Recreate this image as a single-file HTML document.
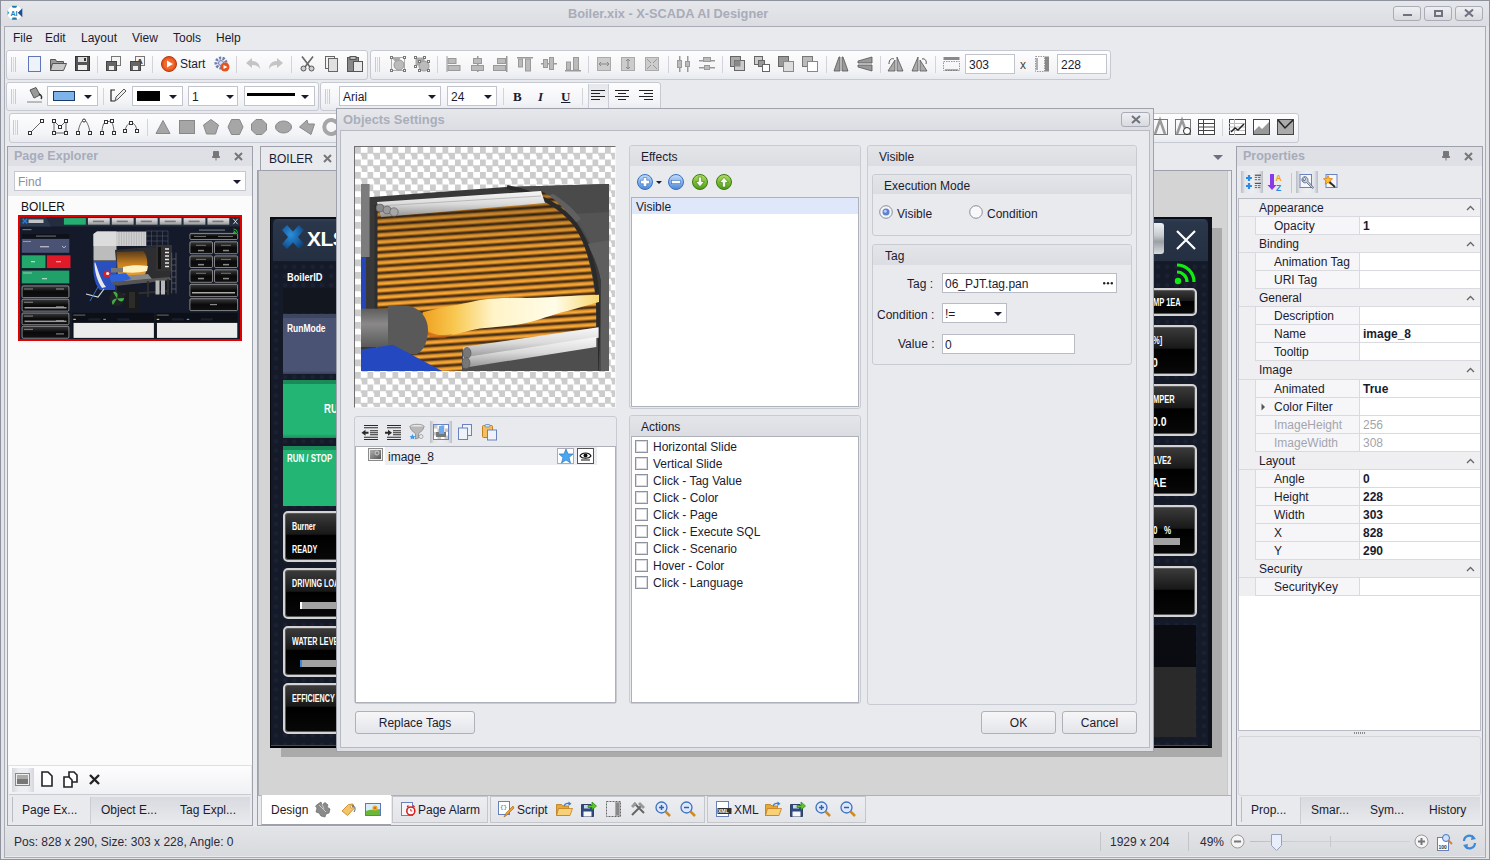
<!DOCTYPE html>
<html><head><meta charset="utf-8">
<style>
*{box-sizing:border-box;margin:0;padding:0}
html,body{width:1490px;height:860px;overflow:hidden;background:#e9eaee;font-family:"Liberation Sans",sans-serif;font-size:12px;color:#1b1b30}
.a{position:absolute}
.t{position:absolute;white-space:nowrap;line-height:1;margin-top:1px}
.tb{position:absolute;background:linear-gradient(#fdfdfe,#f3f4f7 70%,#e9eaef);border:1px solid #c6c9d1;border-radius:3px}
.grip{position:absolute;top:7px;width:5px;height:15px;border-left:1px solid #c9cbd1;border-right:1px solid #c9cbd1}
.grip:after{content:"";position:absolute;left:1px;top:0;width:1px;height:15px;background:#d8dade}
.sep{position:absolute;top:6px;width:1px;height:17px;background:#d2d4da}
.ic{position:absolute;width:16px;height:16px}
.dd{position:absolute;background:#fff;border:1px solid #c1c4cc}
.arr{position:absolute;width:0;height:0;border-left:4px solid transparent;border-right:4px solid transparent;border-top:4px solid #1b1b30}
.pnl{position:absolute;border:1px solid #9ea1ab}
.ptitle{position:absolute;font-weight:bold;color:#a7acba;font-size:12.5px;line-height:1;white-space:nowrap}
.btn{position:absolute;background:linear-gradient(#f6f6f8,#e4e5ea);border:1px solid #aeb1ba;border-radius:3px;text-align:center;font-size:12px;line-height:22px}
.grp{position:absolute;border:1px solid #c5c8cf;border-radius:3px;background:#e9eaee}
.ghdr{position:absolute;left:0;right:0;top:0;background:#dcdde2;border-radius:3px 3px 0 0}
.chk{position:absolute;left:5px;width:13px;height:13px;border:1px solid #a2a5ae;background:linear-gradient(#eeeef0,#fff)}
.prop{position:absolute;left:0;width:241px;height:18px}
svg{position:absolute;overflow:visible}
</style></head><body>
<!-- window frame -->
<div class="a" style="left:0;top:0;width:1490px;height:860px;border:1px solid #8e929c;background:#e3e4e8"></div>
<div class="a" style="left:1px;top:1px;width:1488px;height:25px;background:linear-gradient(#e6e7eb,#dcdde2)"></div>
<div class="a" style="left:4px;top:26px;width:1482px;height:832px;border:1px solid #a9acb5;background:#e9eaee"></div>
<div class="t" style="left:568px;top:7px;font-size:12.8px;font-weight:bold;color:#a8acb9">Boiler.xix - X-SCADA AI Designer</div>
<!-- logo -->
<svg style="left:7px;top:4px" width="16" height="18" viewBox="0 0 16 18">
<circle cx="7.8" cy="8.8" r="7.3" fill="#fff"/>
<path d="M4.6,1.8 L10.2,1.8 L9.2,3.8 L5.6,3.8 z" fill="#1f7aa8"/>
<path d="M4.6,15.8 L10.2,15.8 L9.2,13.6 L5.6,13.6 z" fill="#1f7aa8"/>
<path d="M15.3,4.3 L15.3,13.2 L10.8,8.8 z" fill="#1d4f8f"/>
<path d="M0.5,6.5 L2.3,8.8 L0.5,11 z" fill="#2a9fc8"/>
<text x="7" y="12" font-size="7" font-weight="bold" fill="#2080b0" text-anchor="middle" font-family="Liberation Sans">AI</text>
</svg>
<!-- window buttons -->
<div class="a" style="left:1393px;top:6px;width:28px;height:15px;border:1px solid #a9acb6;border-radius:3px;background:linear-gradient(#eeeff2,#d9dade)"></div>
<div class="a" style="left:1403px;top:14px;width:9px;height:2px;background:#6e7180"></div>
<div class="a" style="left:1424px;top:6px;width:28px;height:15px;border:1px solid #a9acb6;border-radius:3px;background:linear-gradient(#eeeff2,#d9dade)"></div>
<div class="a" style="left:1434px;top:10px;width:9px;height:7px;border:2px solid #6e7180"></div>
<div class="a" style="left:1455px;top:6px;width:28px;height:15px;border:1px solid #a9acb6;border-radius:3px;background:linear-gradient(#eeeff2,#d9dade)"></div>
<svg style="left:1464px;top:9px" width="10" height="8"><path d="M1,0.5 L9,7.5 M9,0.5 L1,7.5" stroke="#6e7180" stroke-width="2"/></svg>
<!-- menu -->
<div class="t" style="left:13px;top:31px;font-size:12px">File</div>
<div class="t" style="left:45px;top:31px;font-size:12px">Edit</div>
<div class="t" style="left:81px;top:31px;font-size:12px">Layout</div>
<div class="t" style="left:132px;top:31px;font-size:12px">View</div>
<div class="t" style="left:173px;top:31px;font-size:12px">Tools</div>
<div class="t" style="left:216px;top:31px;font-size:12px">Help</div>
<!-- ===== TOOLBAR 1 ===== -->
<div class="tb" style="left:6px;top:50px;width:362px;height:30px"></div>
<div class="grip" style="left:11px;top:57px"></div>
<svg style="left:27px;top:56px" width="16" height="16"><rect x="1.5" y="0.5" width="12" height="15" fill="#eef2fb" stroke="#5d77b8"/></svg>
<svg style="left:50px;top:57px" width="17" height="14"><path d="M0.5,2.5 h5 l1,2 h7 v2 h-11 l-2,7 z" fill="#9a9a9a" stroke="#555"/><path d="M2.5,6.5 h14 l-3,7 h-13 z" fill="#c8c8c8" stroke="#555"/></svg>
<svg style="left:75px;top:56px" width="15" height="15"><rect x="0.5" y="0.5" width="14" height="14" fill="#555" stroke="#333"/><rect x="3" y="1" width="9" height="5" fill="#ddd"/><rect x="9" y="2" width="2" height="3" fill="#333"/><rect x="3" y="9" width="9" height="5" fill="#eee"/></svg>
<div class="sep" style="left:97px;top:56px"></div>
<svg style="left:106px;top:56px" width="15" height="15"><rect x="5.5" y="0.5" width="9" height="9" fill="#f4f4f4" stroke="#777"/><rect x="0.5" y="5.5" width="10" height="9" fill="#666" stroke="#444"/><rect x="3" y="10" width="5" height="4" fill="#eee"/></svg>
<svg style="left:130px;top:56px" width="15" height="15"><rect x="5.5" y="0.5" width="9" height="9" fill="#f4f4f4" stroke="#777"/><text x="7" y="8" font-size="8" font-weight="bold" fill="#333" font-family="Liberation Sans">A</text><rect x="0.5" y="5.5" width="10" height="9" fill="#666" stroke="#444"/><rect x="3" y="10" width="5" height="4" fill="#eee"/></svg>
<div class="sep" style="left:152px;top:56px"></div>
<svg style="left:161px;top:56px" width="16" height="16"><circle cx="8" cy="8" r="7.5" fill="#e8521c" stroke="#b33a10"/><circle cx="8" cy="8" r="5.5" fill="#f06a30"/><path d="M6,4.5 L12,8 L6,11.5 z" fill="#fff"/></svg>
<div class="t" style="left:180px;top:57px;font-size:12px">Start</div>
<svg style="left:214px;top:56px" width="16" height="16"><circle cx="7" cy="7" r="5" fill="none" stroke="#6a7fb0" stroke-width="3" stroke-dasharray="2.2 1.3"/><circle cx="7" cy="7" r="2.5" fill="#dde" stroke="#6a7fb0"/><circle cx="11" cy="11" r="4.5" fill="#e8521c"/><path d="M9.5,9 L13.5,11 L9.5,13 z" fill="#fff"/></svg>
<div class="sep" style="left:236px;top:56px"></div>
<svg style="left:245px;top:57px" width="16" height="14"><path d="M1,6 L7,1 V4 C12,4 15,7 15,12 C13,9 11,8 7,8 V11 z" fill="#c4c4c4"/></svg>
<svg style="left:268px;top:57px" width="16" height="14"><path d="M15,6 L9,1 V4 C4,4 1,7 1,12 C3,9 5,8 9,8 V11 z" fill="#c4c4c4"/></svg>
<div class="sep" style="left:291px;top:56px"></div>
<svg style="left:300px;top:56px" width="15" height="16"><path d="M2,0.5 L10,11 M13,0.5 L5,11" stroke="#666" stroke-width="1.6"/><circle cx="3.5" cy="12.5" r="2.5" fill="#ccc" stroke="#555"/><circle cx="11.5" cy="12.5" r="2.5" fill="#ccc" stroke="#555"/></svg>
<svg style="left:325px;top:56px" width="13" height="16"><rect x="0.5" y="0.5" width="9" height="12" fill="#f4f4f4" stroke="#666"/><rect x="3.5" y="2.5" width="9" height="13" fill="#e0e0e0" stroke="#666"/></svg>
<svg style="left:347px;top:56px" width="17" height="16"><rect x="0.5" y="1.5" width="11" height="14" fill="#888" stroke="#555"/><rect x="3" y="0.5" width="6" height="3" fill="#bbb" stroke="#555"/><rect x="6.5" y="5.5" width="9" height="10" fill="#e8e8e8" stroke="#555"/></svg>

<div class="tb" style="left:370px;top:50px;width:741px;height:30px"></div>
<div class="grip" style="left:375px;top:57px"></div>
<svg style="left:390px;top:56px" width="16" height="16"><rect x="1.5" y="1.5" width="13" height="13" fill="none" stroke="#999" stroke-width="0.8"/><path d="M1.5,1.5 h9 l-3,7 z" fill="#aaa"/><circle cx="9" cy="9" r="5" fill="#bbb" stroke="#999"/><g fill="#fff" stroke="#777"><rect x="0.5" y="0.5" width="2" height="2"/><rect x="13.5" y="0.5" width="2" height="2"/><rect x="0.5" y="13.5" width="2" height="2"/><rect x="13.5" y="13.5" width="2" height="2"/></g></svg>
<svg style="left:414px;top:56px" width="16" height="16"><rect x="1.5" y="1.5" width="9" height="8" fill="#aaa"/><circle cx="10" cy="10" r="5" fill="#bbb" stroke="#999"/><g fill="#fff" stroke="#777"><rect x="0.5" y="0.5" width="2" height="2"/><rect x="9.5" y="0.5" width="2" height="2"/><rect x="0.5" y="9.5" width="2" height="2"/><rect x="13.5" y="13.5" width="2" height="2"/><rect x="4.5" y="4.5" width="2" height="2"/><rect x="13.5" y="4.5" width="2" height="2"/><rect x="4.5" y="13.5" width="2" height="2"/></g></svg>
<div class="sep" style="left:437px;top:56px"></div>
<svg style="left:446px;top:56px" width="16" height="16"><rect x="0.5" y="0" width="1" height="16" fill="#999"/><rect x="2" y="2.5" width="8" height="5" fill="#bbb" stroke="#999"/><rect x="2" y="9.5" width="12" height="5" fill="#bbb" stroke="#999"/></svg>
<svg style="left:470px;top:56px" width="16" height="16"><rect x="7" y="0" width="1.5" height="16" fill="#999"/><rect x="3.5" y="2.5" width="8" height="5" fill="#bbb" stroke="#999"/><rect x="1.5" y="9.5" width="12" height="5" fill="#bbb" stroke="#999"/></svg>
<svg style="left:493px;top:56px" width="16" height="16"><rect x="13" y="0" width="1.5" height="16" fill="#999"/><rect x="4.5" y="2.5" width="8" height="5" fill="#bbb" stroke="#999"/><rect x="0.5" y="9.5" width="12" height="5" fill="#bbb" stroke="#999"/></svg>
<svg style="left:517px;top:56px" width="16" height="16"><rect x="0" y="1" width="16" height="1.5" fill="#999"/><rect x="1.5" y="3" width="4" height="8" fill="#bbb" stroke="#999"/><rect x="8.5" y="3" width="5" height="12" fill="#bbb" stroke="#999"/></svg>
<svg style="left:541px;top:56px" width="16" height="16"><rect x="0" y="7" width="16" height="1.5" fill="#999"/><rect x="2.5" y="3.5" width="4" height="8" fill="#bbb" stroke="#999"/><rect x="8.5" y="1.5" width="4" height="12" fill="#bbb" stroke="#999"/></svg>
<svg style="left:565px;top:56px" width="16" height="16"><rect x="0" y="14" width="16" height="1.5" fill="#999"/><rect x="1.5" y="6" width="4" height="8" fill="#bbb" stroke="#999"/><rect x="8.5" y="1.5" width="5" height="12.5" fill="#bbb" stroke="#999"/></svg>
<div class="sep" style="left:588px;top:56px"></div>
<svg style="left:596px;top:56px" width="16" height="16"><rect x="1.5" y="1.5" width="13" height="13" fill="#ccc" stroke="#aaa"/><path d="M3,8 h10 M3,8 l2,-2 M3,8 l2,2 M13,8 l-2,-2 M13,8 l-2,2" stroke="#888"/></svg>
<svg style="left:620px;top:56px" width="16" height="16"><rect x="1.5" y="1.5" width="13" height="13" fill="#ccc" stroke="#aaa"/><path d="M8,3 v10 M8,3 l-2,2 M8,3 l2,2 M8,13 l-2,-2 M8,13 l2,-2" stroke="#888"/></svg>
<svg style="left:644px;top:56px" width="16" height="16"><rect x="1.5" y="1.5" width="13" height="13" fill="#ccc" stroke="#aaa"/><path d="M3,3 l4,4 M13,3 l-4,4 M3,13 l4,-4 M13,13 l-4,-4" stroke="#999"/></svg>
<div class="sep" style="left:668px;top:56px"></div>
<svg style="left:676px;top:56px" width="16" height="16"><rect x="3" y="0" width="1.5" height="16" fill="#999"/><rect x="11" y="0" width="1.5" height="16" fill="#999"/><rect x="1.5" y="4.5" width="4" height="7" fill="#bbb" stroke="#999"/><rect x="9.5" y="5.5" width="4" height="5" fill="#bbb" stroke="#999"/></svg>
<svg style="left:699px;top:56px" width="16" height="16"><rect x="0" y="4" width="16" height="1.5" fill="#999"/><rect x="0" y="11" width="16" height="1.5" fill="#999"/><rect x="4.5" y="1.5" width="7" height="4" fill="#bbb" stroke="#999"/><rect x="5.5" y="9.5" width="5" height="4" fill="#bbb" stroke="#999"/></svg>
<div class="sep" style="left:722px;top:56px"></div>
<svg style="left:730px;top:56px" width="16" height="16"><rect x="0.5" y="0.5" width="10" height="10" fill="#aaa" stroke="#666"/><rect x="4.5" y="4.5" width="10" height="10" fill="#ccc" stroke="#666"/><rect x="4.5" y="4.5" width="6" height="6" fill="#888"/></svg>
<svg style="left:754px;top:56px" width="16" height="16"><rect x="0.5" y="0.5" width="8" height="8" fill="#ccc" stroke="#666"/><rect x="4.5" y="4.5" width="6" height="6" fill="#999" stroke="#666"/><rect x="8.5" y="8.5" width="7" height="7" fill="#fff" stroke="#666"/></svg>
<svg style="left:778px;top:56px" width="16" height="16"><rect x="0.5" y="0.5" width="10" height="10" fill="#999" stroke="#666"/><rect x="5.5" y="5.5" width="10" height="10" fill="#ddd" stroke="#888"/></svg>
<svg style="left:802px;top:56px" width="16" height="16"><rect x="0.5" y="0.5" width="10" height="10" fill="#bbb" stroke="#777"/><rect x="5.5" y="5.5" width="10" height="10" fill="#fff" stroke="#888"/></svg>
<div class="sep" style="left:826px;top:56px"></div>
<svg style="left:833px;top:56px" width="16" height="16"><path d="M6,1 L1,15 H7 V1 z M9,1 V15 H15 L10,1 z" fill="#999" stroke="#555" stroke-width="0.8"/></svg>
<svg style="left:857px;top:56px" width="16" height="16"><path d="M1,5 L15,1 V7 H1 z M1,9 H15 V15 L1,11 z" fill="#999" stroke="#555" stroke-width="0.8"/></svg>
<div class="sep" style="left:880px;top:56px"></div>
<svg style="left:887px;top:56px" width="17" height="16"><path d="M8,4 L1,15 H8 z M10,1 V15 H16 z" fill="#aaa" stroke="#555" stroke-width="0.8"/><path d="M2,8 C2,3 5,2 7,3" fill="none" stroke="#555"/></svg>
<svg style="left:911px;top:56px" width="17" height="16"><path d="M7,1 L1,15 H7 z M9,4 V15 H16 z" fill="#aaa" stroke="#555" stroke-width="0.8"/><path d="M11,3 C14,2 16,5 15,8" fill="none" stroke="#555"/></svg>
<div class="sep" style="left:935px;top:56px"></div>
<svg style="left:943px;top:56px" width="17" height="16"><rect x="0.5" y="1" width="16" height="3" fill="#888"/><rect x="0.5" y="5.5" width="16" height="9" fill="none" stroke="#999" stroke-dasharray="1.5 1"/><path d="M2,14 h13" stroke="#666"/></svg>
<div class="dd" style="left:965px;top:54px;width:50px;height:20px"></div>
<div class="t" style="left:969px;top:58px;font-size:12px">303</div>
<div class="t" style="left:1020px;top:58px;font-size:12px;color:#444">x</div>
<svg style="left:1034px;top:56px" width="17" height="16"><rect x="11" y="0.5" width="4" height="15" fill="#888"/><rect x="1.5" y="0.5" width="9" height="15" fill="none" stroke="#999" stroke-dasharray="1.5 1"/><path d="M3,2 v12" stroke="#666"/></svg>
<div class="dd" style="left:1057px;top:54px;width:50px;height:20px"></div>
<div class="t" style="left:1061px;top:58px;font-size:12px">228</div>

<!-- ===== TOOLBAR 2 ===== -->
<div class="tb" style="left:6px;top:82px;width:313px;height:29px"></div>
<div class="grip" style="left:11px;top:89px"></div>
<svg style="left:27px;top:87px" width="16" height="17"><path d="M3,3 L9,0.5 L13,8 L7,11 z" fill="#999" stroke="#555"/><path d="M12,7 C15,8 15,11 14,12" fill="none" stroke="#333" stroke-width="1.5"/><rect x="0" y="14" width="15" height="2" fill="#bbb"/></svg>
<div class="dd" style="left:47px;top:86px;width:51px;height:20px"></div>
<div class="a" style="left:53px;top:91px;width:22px;height:10px;background:#7eb4ea;border:1px solid #1b3a6e"></div>
<div class="arr" style="left:84px;top:95px"></div>
<div class="sep" style="left:103px;top:88px"></div>
<svg style="left:110px;top:88px" width="17" height="15"><path d="M5,2 H1 V13 H5" fill="none" stroke="#222" stroke-width="1.2"/><path d="M5,13 L6,9 L14,1 L16,3 L8,11 z" fill="#eee" stroke="#555"/></svg>
<div class="dd" style="left:132px;top:86px;width:51px;height:20px"></div>
<div class="a" style="left:137px;top:91px;width:23px;height:10px;background:#000"></div>
<div class="arr" style="left:169px;top:95px"></div>
<div class="dd" style="left:188px;top:86px;width:50px;height:20px"></div>
<div class="t" style="left:192px;top:90px;font-size:12px">1</div>
<div class="arr" style="left:226px;top:95px"></div>
<div class="dd" style="left:244px;top:86px;width:71px;height:20px"></div>
<div class="a" style="left:247px;top:93px;width:48px;height:3px;background:#000"></div>
<div class="arr" style="left:301px;top:95px"></div>

<div class="tb" style="left:320px;top:82px;width:341px;height:29px"></div>
<div class="grip" style="left:325px;top:89px"></div>
<div class="dd" style="left:339px;top:86px;width:102px;height:20px"></div>
<div class="t" style="left:343px;top:90px;font-size:12px">Arial</div>
<div class="arr" style="left:428px;top:95px"></div>
<div class="dd" style="left:447px;top:86px;width:50px;height:20px"></div>
<div class="t" style="left:451px;top:90px;font-size:12px">24</div>
<div class="arr" style="left:484px;top:95px"></div>
<div class="sep" style="left:503px;top:88px"></div>
<div class="t" style="left:513px;top:89px;font-size:13px;font-weight:bold;font-family:'Liberation Serif'">B</div>
<div class="t" style="left:538px;top:89px;font-size:13px;font-weight:bold;font-style:italic;font-family:'Liberation Serif'">I</div>
<div class="t" style="left:561px;top:89px;font-size:13px;font-weight:bold;text-decoration:underline;font-family:'Liberation Serif'">U</div>
<div class="sep" style="left:582px;top:88px"></div>
<div class="a" style="left:588px;top:84px;width:21px;height:25px;background:linear-gradient(#e6e7ec,#f1f2f5);border-left:1px solid #c9ccd4;border-right:1px solid #c9ccd4"></div>
<svg style="left:591px;top:90px" width="15" height="12"><path d="M0,0.5 h14 M0,3.5 h9 M0,6.5 h14 M0,9.5 h9" stroke="#222"/></svg>
<svg style="left:615px;top:90px" width="15" height="12"><path d="M0,0.5 h14 M3,3.5 h8 M0,6.5 h14 M3,9.5 h8" stroke="#222"/></svg>
<svg style="left:639px;top:90px" width="15" height="12"><path d="M0,0.5 h14 M5,3.5 h9 M0,6.5 h14 M5,9.5 h9" stroke="#222"/></svg>

<!-- ===== TOOLBAR 3 ===== -->
<div class="tb" style="left:9px;top:113px;width:1290px;height:30px"></div>
<div class="grip" style="left:13px;top:120px"></div>
<svg style="left:28px;top:119px" width="16" height="16"><path d="M2,14 L14,2" stroke="#666"/><rect x="0.5" y="12.5" width="3" height="3" fill="#fff" stroke="#333"/><rect x="12.5" y="0.5" width="3" height="3" fill="#fff" stroke="#333"/></svg>
<svg style="left:52px;top:119px" width="16" height="16"><path d="M2,2 V14 H14 V2 L8,8 z" fill="none" stroke="#666"/><g fill="#fff" stroke="#333"><rect x="0.5" y="0.5" width="3" height="3"/><rect x="12.5" y="0.5" width="3" height="3"/><rect x="0.5" y="12.5" width="3" height="3"/><rect x="12.5" y="12.5" width="3" height="3"/><rect x="6.5" y="6.5" width="3" height="3"/></g></svg>
<svg style="left:76px;top:119px" width="16" height="16"><path d="M2,14 C3,6 6,1 8,1 C10,1 13,6 14,14" fill="none" stroke="#666"/><g fill="#fff" stroke="#333"><rect x="0.5" y="12.5" width="3" height="3"/><rect x="12.5" y="12.5" width="3" height="3"/><circle cx="8" cy="1.5" r="1.5"/></g></svg>
<svg style="left:100px;top:119px" width="16" height="16"><path d="M2,14 C2,7 4,3 6,3 L11,2 C13,5 14,9 14,14" fill="none" stroke="#666"/><g fill="#fff" stroke="#333"><rect x="0.5" y="12.5" width="3" height="3"/><rect x="12.5" y="12.5" width="3" height="3"/><rect x="4.5" y="1.5" width="3" height="3"/><rect x="10.5" y="0.5" width="3" height="3"/></g></svg>
<svg style="left:123px;top:121px" width="16" height="12"><path d="M2,10 C3,4 6,2 8,2 C11,2 13,4 14,10" fill="none" stroke="#666"/><g fill="#fff" stroke="#333"><rect x="0.5" y="8.5" width="3" height="3"/><rect x="12.5" y="8.5" width="3" height="3"/><rect x="6.5" y="0.5" width="3" height="3"/></g></svg>
<div class="sep" style="left:147px;top:119px"></div>
<svg style="left:155px;top:120px" width="16" height="14"><path d="M8,0.5 L15,13.5 H1 z" fill="#a6a6a6" stroke="#888"/></svg>
<svg style="left:179px;top:120px" width="16" height="14"><rect x="0.5" y="0.5" width="15" height="13" fill="#a6a6a6" stroke="#888"/></svg>
<svg style="left:203px;top:119px" width="16" height="16"><path d="M8,0.5 L15.5,6 L12.5,15 H3.5 L0.5,6 z" fill="#a6a6a6" stroke="#888"/></svg>
<svg style="left:227px;top:119px" width="17" height="16"><path d="M4.5,0.5 H12.5 L16,8 L12.5,15.5 H4.5 L1,8 z" fill="#a6a6a6" stroke="#888"/></svg>
<svg style="left:251px;top:119px" width="16" height="16"><path d="M5,0.5 H11 L15.5,5 V11 L11,15.5 H5 L0.5,11 V5 z" fill="#a6a6a6" stroke="#888"/></svg>
<svg style="left:275px;top:120px" width="17" height="14"><ellipse cx="8.5" cy="7" rx="8" ry="6" fill="#a6a6a6" stroke="#888"/></svg>
<svg style="left:299px;top:119px" width="16" height="16"><path d="M0.5,8 L8,1 L9,5 L15.5,5 L12,15.5 z" fill="#a6a6a6" stroke="#888"/></svg>
<svg style="left:323px;top:119px" width="16" height="16"><path d="M14,4 A7,7 0 1 0 14,12" fill="none" stroke="#a6a6a6" stroke-width="4"/></svg>
<svg style="left:1152px;top:119px" width="16" height="16"><path d="M3,15 L8,1 L13,15" fill="none" stroke="#999" stroke-width="2.5"/><rect x="0.5" y="0.5" width="15" height="15" fill="none" stroke="#777"/></svg>
<svg style="left:1175px;top:119px" width="17" height="16"><path d="M2,15 L7,1 L12,15" fill="none" stroke="#999" stroke-width="2.5"/><rect x="0.5" y="0.5" width="15" height="15" fill="none" stroke="#777"/><circle cx="12" cy="12" r="3.5" fill="#fff" stroke="#222"/></svg>
<svg style="left:1198px;top:119px" width="17" height="16"><rect x="0.5" y="0.5" width="16" height="15" fill="#fff" stroke="#444"/><path d="M0,4.5 h16 M0,8 h16 M0,11.5 h16 M5.5,0 v16" stroke="#444"/></svg>
<div class="sep" style="left:1222px;top:119px"></div>
<svg style="left:1229px;top:119px" width="17" height="16"><rect x="0.5" y="0.5" width="16" height="15" fill="#fff" stroke="#444"/><path d="M0,4.5 h16 M0,8 h16 M0,11.5 h16 M5.5,0 v16" stroke="#bbb"/><path d="M2,13 L6,9 L9,11 L15,5" fill="none" stroke="#222" stroke-width="1.5"/></svg>
<svg style="left:1253px;top:119px" width="17" height="16"><rect x="0.5" y="0.5" width="16" height="15" fill="#fff" stroke="#444"/><path d="M1,15 L1,12 L6,7 L9,10 L16,3 V15 z" fill="#999"/></svg>
<svg style="left:1277px;top:119px" width="17" height="16"><rect x="0.5" y="0.5" width="16" height="15" fill="#aaa" stroke="#444"/><path d="M1,1 L8,9 L16,1" fill="none" stroke="#222" stroke-width="1.5"/></svg>
<!-- ===== PAGE EXPLORER ===== -->
<div class="pnl" style="left:7px;top:146px;width:246px;height:680px;background:#e9eaee"></div>
<div class="a" style="left:8px;top:147px;width:244px;height:19px;background:#dfe0e5"></div>
<div class="ptitle" style="left:14px;top:150px">Page Explorer</div>
<svg style="left:212px;top:151px" width="8" height="10"><path d="M1.5,0.5 h5 v5 h1 v1 h-7 v-1 h1 z M4,6.5 v3" fill="#777" stroke="#777"/></svg>
<svg style="left:234px;top:152px" width="9" height="9"><path d="M1,1 L8,8 M8,1 L1,8" stroke="#777" stroke-width="2"/></svg>
<div class="a" style="left:8px;top:166px;width:244px;height:30px;background:#e9eaee"></div>
<div class="a" style="left:14px;top:171px;width:232px;height:20px;background:#fff;border:1px solid #c5c8d0"></div>
<div class="t" style="left:18px;top:175px;font-size:12px;color:#8c90a0">Find</div>
<div class="arr" style="left:233px;top:180px"></div>
<div class="a" style="left:8px;top:196px;width:244px;height:569px;background:#fbfbfc"></div>
<div class="t" style="left:21px;top:200px;font-size:12px;color:#111">BOILER</div>
<!-- thumbnail -->
<div class="a" style="left:18px;top:215px;width:224px;height:126px;border:2px solid #e00000;background:#151b2a"></div>
<svg style="left:20px;top:217px" width="220" height="122" viewBox="0 0 220 122"><defs><linearGradient id="wg" x1="0" y1="0" x2="0" y2="1"><stop offset="0" stop-color="#3a3a3a"/><stop offset="0.5" stop-color="#0a0a0a"/><stop offset="1" stop-color="#111"/></linearGradient><linearGradient id="gb" x1="0" y1="0" x2="0" y2="1"><stop offset="0" stop-color="#e8e8e8"/><stop offset="1" stop-color="#9a9a9a"/></linearGradient></defs><rect width="220" height="122" fill="#141a29"/><rect width="220" height="9.5" fill="#232d3e"/><path d="M0,0 H26 L31,9.5 H0 z" fill="#2c384c"/><path d="M2.6,1.8 L7.2,6.4 M7.2,1.8 L2.6,6.4" stroke="#2a7ad0" stroke-width="1.6"/><rect x="8.5" y="2.5" width="15" height="3.5" fill="#ddd" opacity="0.85"/><rect x="43.92" y="1.1" width="21.9" height="6.6" fill="#24b070"/><rect x="67.94" y="1.1" width="21.8" height="6.6" fill="url(#gb)"/><rect x="72.94" y="3.6" width="11" height="1.6" fill="#444" opacity="0.6"/><rect x="91.81" y="1.1" width="21.8" height="6.6" fill="url(#gb)"/><rect x="96.81" y="3.6" width="11" height="1.6" fill="#444" opacity="0.6"/><rect x="115.84" y="1.1" width="21.8" height="6.6" fill="url(#gb)"/><rect x="120.84" y="3.6" width="11" height="1.6" fill="#444" opacity="0.6"/><rect x="139.71" y="1.1" width="21.8" height="6.6" fill="url(#gb)"/><rect x="144.71" y="3.6" width="11" height="1.6" fill="#444" opacity="0.6"/><rect x="163.58" y="1.1" width="21.8" height="6.6" fill="url(#gb)"/><rect x="168.58" y="3.6" width="11" height="1.6" fill="#444" opacity="0.6"/><rect x="187.45" y="1.1" width="21.8" height="6.6" fill="url(#gb)"/><rect x="192.45" y="3.6" width="11" height="1.6" fill="#444" opacity="0.6"/><path d="M213.3,1.8 L217.6,7.2 M217.6,1.8 L213.3,7.2" stroke="#fff" stroke-width="0.8"/><rect x="2.5" y="12" width="9" height="1.2" fill="#aaa" opacity="0.6"/><rect x="1.8" y="17.1" width="47.5" height="4" fill="#0e1118"/><rect x="16" y="18.5" width="20" height="1.2" fill="#999" opacity="0.6"/><rect x="1.8" y="22" width="47.5" height="13.8" fill="#4b5374"/><rect x="3" y="24" width="8" height="1" fill="#ccc" opacity="0.6"/><rect x="20" y="29" width="9" height="1.4" fill="#ddd" opacity="0.7"/><path d="M42,29 l2,1.8 l2,-1.8" stroke="#fff" stroke-width="0.6" fill="none"/><rect x="1.8" y="38.3" width="23.7" height="12.8" fill="#23a86c"/><rect x="11" y="44" width="4" height="1.3" fill="#fff" opacity="0.6"/><rect x="26.8" y="38.3" width="23.7" height="12.8" fill="#e01a28"/><rect x="36" y="44" width="5" height="1.3" fill="#fff" opacity="0.6"/><rect x="1.8" y="53.6" width="47.5" height="12.8" fill="#22a06a"/><rect x="3" y="55.5" width="9" height="1" fill="#fff" opacity="0.5"/><rect x="22" y="61" width="5" height="1.3" fill="#fff" opacity="0.6"/><rect x="2.1" y="68.9" width="46.8" height="11.7" rx="1.2" fill="url(#wg)" stroke="#ccc" stroke-width="0.6"/><rect x="4" y="71.4" width="9" height="1.2" fill="#ccc" opacity="0.5"/><rect x="36" y="71.4" width="8" height="1.2" fill="#ccc" opacity="0.6"/><rect x="2.1" y="82.2" width="46.8" height="11.9" rx="1.2" fill="url(#wg)" stroke="#ccc" stroke-width="0.6"/><rect x="4" y="84.7" width="9" height="1.2" fill="#ccc" opacity="0.5"/><rect x="36" y="89.2" width="8" height="1.2" fill="#ccc" opacity="0.6"/><rect x="2.1" y="96" width="46.8" height="11.7" rx="1.2" fill="url(#wg)" stroke="#ccc" stroke-width="0.6"/><rect x="4" y="98.5" width="9" height="1.2" fill="#ccc" opacity="0.5"/><rect x="36" y="103" width="8" height="1.2" fill="#ccc" opacity="0.6"/><rect x="2.1" y="109.3" width="46.8" height="11.9" rx="1.2" fill="url(#wg)" stroke="#ccc" stroke-width="0.6"/><rect x="4" y="111.8" width="9" height="1.2" fill="#ccc" opacity="0.5"/><rect x="36" y="116.3" width="8" height="1.2" fill="#ccc" opacity="0.6"/><rect x="4.5" y="90" width="42" height="1.5" fill="#999"/><rect x="4.5" y="103.6" width="42" height="1.5" fill="#999"/><path d="M126,14 H148 V29 H126 M131.5,14 V29 M137,14 V29 M142.5,14 V29 M126,19 H148 M126,24 H148" fill="none" stroke="#5a6070" stroke-width="0.5"/>
<path d="M73.5,17 L77,14.5 H126.3 V29 H96.5 V43.4 H73.5 z" fill="#bcbcbc"/>
<path d="M73.5,17 L77,14.5 H96.5 V29 H73.5 z" fill="#dcdcdc"/>
<rect x="97" y="15" width="29" height="14" fill="#cfcfcf"/><path d="M99,15 V29 M101.5,15 V29 M104,15 V29 M106.5,15 V29 M109,15 V29 M111.5,15 V29 M114,15 V29 M116.5,15 V29 M119,15 V29 M121.5,15 V29 M124,15 V29" stroke="#a8a8a8" stroke-width="0.6"/>
<path d="M95,33 L130,30 L150,31 L152,50 L150,60 L130,66 L98,66 z" fill="#2e2e30"/>
<rect x="136" y="28" width="16" height="26" fill="#333"/><rect x="138" y="30" width="3" height="22" fill="#111"/><path d="M145,32 h4 M145,35.5 h4 M145,39 h4 M145,42.5 h4 M145,46 h4 M145,49.5 h4" stroke="#e8e8e8" stroke-width="1.3"/>
<defs><linearGradient id="thg" x1="0" y1="0" x2="0" y2="1"><stop offset="0" stop-color="#5a3a1a"/><stop offset="0.5" stop-color="#c8801e"/><stop offset="1" stop-color="#f0a030"/></linearGradient></defs>
<path d="M96.5,35 L123,34 C128,38 129,52 124,59 L98,60 z" fill="url(#thg)"/>
<path d="M103,50 C110,48 120,48 128,49 L127,54 C118,56 110,56 103,55 z" fill="#fff2c0"/>
<path d="M98,59 L128,57 L132,62 L100,65 z" fill="#888"/>
<path d="M151.7,35.6 V76.5 M156,35.6 V76.5 M151.7,42 H156 M151.7,48 H156 M151.7,54 H156 M151.7,60 H156 M151.7,66 H156 M151.7,72 H156" stroke="#6a6a70" stroke-width="0.7"/>
<path d="M73.3,44 H96.5 V73 H80 C76,70 73.3,60 73.3,52 z" fill="#2a50c0"/>
<path d="M75,45 C78,52 80,62 86,70 L82,71 C77,64 74.5,54 74.5,46 z" fill="#e8e8e8"/>
<circle cx="87.1" cy="57.1" r="3.5" fill="#d82020"/><circle cx="87.6" cy="56.5" r="1.6" fill="#f4f4f4"/>
<rect x="91" y="51" width="12" height="4.5" fill="#777"/>
<path d="M88.7,58 L106,56 L111,62 L92,67 z" fill="#2f62d8"/>
<path d="M92,65 L150,60 L151,63 L95,69 z" fill="#555"/>
<path d="M96,68 V82 M128,64 V80 M148,62 V78 M96,78 L148,74" stroke="#303030" stroke-width="1.8"/>
<circle cx="97" cy="81.5" r="7.5" fill="#222"/><path d="M97,81.5 L93,75 C96,74 99,76 97,81.5 z M97,81.5 L104,81 C104,85 100,86 97,81.5 z M97,81.5 L93,88 C91,85 92,82 97,81.5 z" fill="#3fae48"/>
<rect x="105.3" y="72" width="13.3" height="22" fill="#1a1a1a"/><rect x="109" y="75" width="6" height="16" fill="#2c2c2c"/>
<rect x="135.5" y="63.5" width="4" height="14" fill="#b8b8b8"/><rect x="141" y="63.5" width="4" height="14" fill="#b8b8b8"/>
<path d="M66,77 L78,80 L84,72" fill="none" stroke="#d8d8d8" stroke-width="1.2"/><path d="M70,84 L78,70" stroke="#3a7ad0" stroke-width="0.9"/>
<rect x="52.33" y="95.9" width="81.87" height="25.3" fill="#0c0f16"/><rect x="53.33" y="97.5" width="12" height="1.2" fill="#aaa" opacity="0.5"/><rect x="53.53" y="105.9" width="80.37" height="15" fill="#ececec"/><rect x="53.33" y="101.8" width="2.5" height="1.2" fill="#d8c020"/><rect x="68.33" y="101.3" width="12" height="2.2" fill="#1a2030"/><rect x="83.33" y="101.8" width="2.5" height="1.2" fill="#20b0d0"/><rect x="97.33" y="101.3" width="12" height="2.2" fill="#1a2030"/><rect x="135.73" y="95.9" width="81.87" height="25.3" fill="#0c0f16"/><rect x="136.73" y="97.5" width="12" height="1.2" fill="#aaa" opacity="0.5"/><rect x="136.92999999999998" y="105.9" width="80.37" height="15" fill="#ececec"/><rect x="136.73" y="101.8" width="2.5" height="1.2" fill="#d8c020"/><rect x="151.73" y="101.3" width="12" height="2.2" fill="#1a2030"/><rect x="166.73" y="101.8" width="2.5" height="1.2" fill="#20b0d0"/><rect x="180.73" y="101.3" width="12" height="2.2" fill="#1a2030"/><rect x="179" y="12.5" width="26" height="1.2" fill="#aaa" opacity="0.6"/><path d="M213.5,12 A4,4 0 0 1 217.5,16 M213.5,14 A2,2 0 0 1 215.5,16" fill="none" stroke="#2c2" stroke-width="0.9"/><circle cx="214" cy="15.6" r="0.8" fill="#2c2"/><rect x="169.9" y="16.4" width="47.7" height="6.1" rx="1.2" fill="url(#wg)" stroke="#ccc" stroke-width="0.6"/><rect x="174" y="19" width="12" height="1" fill="#ccc" opacity="0.5"/><rect x="198" y="19" width="15" height="1" fill="#ccc" opacity="0.5"/><rect x="169.9" y="24.8" width="22.6" height="11.9" rx="1.2" fill="url(#wg)" stroke="#ccc" stroke-width="0.6"/><rect x="194.5" y="24.8" width="23.1" height="11.9" rx="1.2" fill="url(#wg)" stroke="#ccc" stroke-width="0.6"/><rect x="176" y="27.8" width="10" height="1" fill="#ccc" opacity="0.5"/><rect x="178" y="32.8" width="6" height="1.5" fill="#ddd" opacity="0.6"/><rect x="201" y="27.8" width="10" height="1" fill="#ccc" opacity="0.5"/><rect x="203" y="32.8" width="6" height="1.5" fill="#ddd" opacity="0.6"/><rect x="169.9" y="38.9" width="22.6" height="11.6" rx="1.2" fill="url(#wg)" stroke="#ccc" stroke-width="0.6"/><rect x="194.5" y="38.9" width="23.1" height="11.6" rx="1.2" fill="url(#wg)" stroke="#ccc" stroke-width="0.6"/><rect x="176" y="41.9" width="10" height="1" fill="#ccc" opacity="0.5"/><rect x="178" y="46.9" width="6" height="1.5" fill="#ddd" opacity="0.6"/><rect x="201" y="41.9" width="10" height="1" fill="#ccc" opacity="0.5"/><rect x="203" y="46.9" width="6" height="1.5" fill="#ddd" opacity="0.6"/><rect x="169.9" y="52.8" width="22.6" height="12.5" rx="1.2" fill="url(#wg)" stroke="#ccc" stroke-width="0.6"/><rect x="194.5" y="52.8" width="23.1" height="12.5" rx="1.2" fill="url(#wg)" stroke="#ccc" stroke-width="0.6"/><rect x="176" y="55.8" width="10" height="1" fill="#ccc" opacity="0.5"/><rect x="178" y="60.8" width="6" height="1.5" fill="#ddd" opacity="0.6"/><rect x="201" y="55.8" width="10" height="1" fill="#ccc" opacity="0.5"/><rect x="203" y="60.8" width="6" height="1.5" fill="#ddd" opacity="0.6"/><rect x="169.9" y="67.3" width="47.7" height="12.3" rx="1.2" fill="url(#wg)" stroke="#ccc" stroke-width="0.6"/><rect x="172" y="75" width="43" height="1.5" fill="#aaa"/><rect x="169.9" y="81.7" width="47.7" height="11.9" rx="1.2" fill="url(#wg)" stroke="#ccc" stroke-width="0.6"/><rect x="190" y="87" width="7" height="1.2" fill="#ddd" opacity="0.6"/></svg>
<!-- explorer toolbar -->
<div class="a" style="left:9px;top:765px;width:242px;height:30px;background:linear-gradient(#fdfdfe,#f0f1f4);border-top:1px solid #dfe0e4;border-bottom:1px solid #c9cbd1"></div>
<div class="a" style="left:12px;top:768px;width:22px;height:24px;background:linear-gradient(90deg,#d5d7dd,#eceef2 30%,#eceef2 70%,#d5d7dd)"></div>
<svg style="left:15px;top:773px" width="15" height="13"><rect x="0.5" y="0.5" width="14" height="12" fill="#eee" stroke="#888"/><rect x="2" y="2" width="11" height="9" fill="#777"/><rect x="2" y="2" width="11" height="4" fill="#aaa"/></svg>
<svg style="left:41px;top:771px" width="12" height="16"><path d="M1,1 H7 L11,5 V15 H1 z" fill="#fff" stroke="#222" stroke-width="1.6"/></svg>
<svg style="left:63px;top:771px" width="16" height="17"><path d="M6,1 H11 L14,4 V11 H6 z" fill="#fff" stroke="#222" stroke-width="1.6"/><path d="M1,6 H6 L9,9 V16 H1 z" fill="#fff" stroke="#222" stroke-width="1.6"/></svg>
<svg style="left:89px;top:774px" width="11" height="11"><path d="M1,1 L10,10 M10,1 L1,10" stroke="#222" stroke-width="2.4"/></svg>
<!-- explorer tabs -->
<div class="a" style="left:8px;top:795px;width:244px;height:30px;background:#e9eaee"></div>
<div class="a" style="left:90px;top:797px;width:160px;height:27px;background:linear-gradient(#d9dadf,#e9eaee)"></div>
<div class="a" style="left:12px;top:797px;width:1px;height:25px;background:#b9bcc4"></div>
<div class="a" style="left:90px;top:797px;width:1px;height:27px;background:#c9ccd2"></div>
<div class="t" style="left:22px;top:803px;font-size:12px">Page Ex...</div>
<div class="t" style="left:101px;top:803px;font-size:12px">Object E...</div>
<div class="t" style="left:180px;top:803px;font-size:12px">Tag Expl...</div>

<!-- ===== DESIGN AREA ===== -->
<div class="pnl" style="left:257px;top:170px;width:975px;height:656px;background:#e9eaee"></div>
<div class="a" style="left:260px;top:146px;width:78px;height:24px;border:1px solid #9ea1ab;border-bottom:none;background:#e9eaee"></div>
<div class="t" style="left:269px;top:152px;font-size:12px">BOILER</div>
<svg style="left:323px;top:154px" width="9" height="9"><path d="M1,1 L8,8 M8,1 L1,8" stroke="#777" stroke-width="2"/></svg>
<div class="arr" style="left:1213px;top:155px;border-top-color:#6c7080;border-left-width:5px;border-right-width:5px;border-top-width:5px"></div>
<div class="a" style="left:258px;top:171px;width:969px;height:624px;background:#d4d4d4;border-left:1px solid #a9acb5"></div>
<div class="a" style="left:1227px;top:171px;width:4px;height:624px;background:#e9eaee;border-left:1px solid #c6c8ce"></div>
<!-- design bottom tabs -->
<div class="a" style="left:258px;top:795px;width:973px;height:30px;background:#e9eaee;border-top:1px solid #aeb1b9"></div>
<div class="a" style="left:261px;top:795px;width:130px;height:30px;background:#fff;border-left:1px solid #c4c6cc;border-bottom:1px solid #9ea1ab"></div>
<div class="t" style="left:271px;top:803px;font-size:12px">Design</div>
<svg style="left:315px;top:801px" width="16" height="17"><path d="M3,3 L6,1 L7,4 L10,1.5 L13,4 L12,6 L15,8 L14,12 L11,13 L10,16 L6,15 L4,12 L1,11 L2,7 L0.5,5 z" fill="#8a8a8a" stroke="#6a6a6a" stroke-width="0.7"/><path d="M4,4 L11,11 M7,3 L9,8" stroke="#c8c8c8" stroke-width="1"/></svg>
<svg style="left:341px;top:803px" width="15" height="14"><path d="M1,8 L7.5,1.5 L12,1 L13,5.5 L6.5,12.5 z" fill="#f6c468" stroke="#c88a28" stroke-width="0.9"/><circle cx="10.5" cy="3.8" r="1.2" fill="#fff" stroke="#a07030" stroke-width="0.6"/><path d="M11,3 C14,2 15,6 13,9" fill="none" stroke="#3a4a6a" stroke-width="0.9"/></svg>
<svg style="left:365px;top:803px" width="16" height="13"><rect x="0.5" y="0.5" width="15" height="12" fill="#d8ecfa" stroke="#5a78c0"/><path d="M1,8 C5,6 10,7 15,6 V12 H1 z" fill="#6ab83a"/><circle cx="10" cy="5" r="2.6" fill="#f0a828"/><circle cx="10" cy="5" r="1.1" fill="#c86818"/></svg>
<div class="a" style="left:392px;top:796px;width:96px;height:27px;background:linear-gradient(#eceef2,#e3e4e8);border:1px solid #c4c6cc"></div>
<svg style="left:401px;top:802px" width="16" height="15"><rect x="0.5" y="0.5" width="11" height="13" fill="#f4f6fc" stroke="#6a82c0"/><circle cx="9.8" cy="9" r="4" fill="#fff" stroke="#d82020" stroke-width="1.6"/><path d="M9.8,7 v2 h1.6" stroke="#d82020" stroke-width="0.9" fill="none"/><path d="M6,5 l1.5,-1.5 M13.5,5 l-1.5,-1.5" stroke="#d82020" stroke-width="1.4"/></svg>
<div class="t" style="left:418px;top:803px;font-size:12px">Page Alarm</div>
<div class="a" style="left:490px;top:796px;width:215px;height:27px;background:linear-gradient(#eceef2,#e3e4e8);border:1px solid #c4c6cc"></div>
<svg style="left:498px;top:801px" width="17" height="17"><rect x="0.5" y="0.5" width="11" height="13" fill="#fff" stroke="#6880b8"/><text x="2" y="8" font-size="6" fill="#3050a0" font-family="Liberation Mono">{}</text><path d="M6,16 L8,12 L15,5 L16,7 L9,14 z" fill="#f0a030" stroke="#a06010" stroke-width="0.6"/></svg>
<div class="t" style="left:517px;top:803px;font-size:12px">Script</div>
<svg style="left:556px;top:801px" width="17" height="15"><path d="M0.5,3.5 h5 l1.5,1.5 h5.5 v9.5 h-12 z" fill="#e8a838" stroke="#b87818" stroke-width="0.8"/><path d="M2.5,7.5 h14 l-2.5,7 h-13.5 z" fill="#f8d078" stroke="#c08020" stroke-width="0.8"/><path d="M8,5 C9,2.5 11,2 13,2.5" fill="none" stroke="#3a80d0" stroke-width="1.3"/><path d="M12.5,0.5 L15.5,2.8 L12.5,5 z" fill="#3a80d0"/></svg>
<svg style="left:581px;top:801px" width="16" height="16"><path d="M0.5,3.5 H10 L12.5,6 V15.5 H0.5 z" fill="#2e4a80" stroke="#1a2a50" stroke-width="0.8"/><rect x="3" y="4" width="6" height="3.5" fill="#c8d4e8"/><rect x="2.5" y="10.5" width="8" height="5" fill="#f4f6fa"/><path d="M7,4.5 H11 V1 L15.5,5 L11,9 V6.5 H7 z" fill="#5ac828" stroke="#2a8010" stroke-width="0.7"/></svg>
<svg style="left:606px;top:801px" width="16" height="16"><rect x="0.5" y="0.5" width="14" height="15" fill="none" stroke="#666" stroke-dasharray="2 1"/><rect x="9" y="1" width="5" height="14" fill="#aaa"/><path d="M10,3 h3 M10,5 h3 M10,7 h3 M10,9 h3 M10,11 h3 M10,13 h3" stroke="#666"/></svg>
<svg style="left:630px;top:801px" width="16" height="16"><path d="M2,14 L12,4 M4,2 L14,12" stroke="#666" stroke-width="2"/><path d="M10,1 L15,6 L13,8 L8,3 z" fill="#999"/><path d="M1,5 L5,1 L7,3 L3,7 z" fill="#999"/></svg>
<svg style="left:655px;top:801px" width="16" height="16"><circle cx="6.5" cy="6.5" r="5.5" fill="#dbe8fb" stroke="#4070c0" stroke-width="1.3"/><path d="M4,6.5 h5 M6.5,4 v5" stroke="#3060b0" stroke-width="1.5"/><path d="M10.5,10.5 L15,15" stroke="#d08a20" stroke-width="2.5"/></svg>
<svg style="left:680px;top:801px" width="16" height="16"><circle cx="6.5" cy="6.5" r="5.5" fill="#dbe8fb" stroke="#4070c0" stroke-width="1.3"/><path d="M4,6.5 h5" stroke="#3060b0" stroke-width="1.5"/><path d="M10.5,10.5 L15,15" stroke="#d08a20" stroke-width="2.5"/></svg>
<div class="a" style="left:707px;top:796px;width:159px;height:27px;background:linear-gradient(#eceef2,#e3e4e8);border:1px solid #c4c6cc"></div>
<svg style="left:716px;top:801px" width="16" height="16"><rect x="0.5" y="0.5" width="12" height="15" fill="#fff" stroke="#6880b8"/><rect x="1.5" y="7" width="14" height="6" fill="#333"/><text x="2" y="12" font-size="5" font-weight="bold" fill="#fff" font-family="Liberation Sans">XML</text></svg>
<div class="t" style="left:734px;top:803px;font-size:12px">XML</div>
<svg style="left:765px;top:801px" width="17" height="15"><path d="M0.5,3.5 h5 l1.5,1.5 h5.5 v9.5 h-12 z" fill="#e8a838" stroke="#b87818" stroke-width="0.8"/><path d="M2.5,7.5 h14 l-2.5,7 h-13.5 z" fill="#f8d078" stroke="#c08020" stroke-width="0.8"/><path d="M8,5 C9,2.5 11,2 13,2.5" fill="none" stroke="#3a80d0" stroke-width="1.3"/><path d="M12.5,0.5 L15.5,2.8 L12.5,5 z" fill="#3a80d0"/></svg>
<svg style="left:790px;top:801px" width="16" height="16"><path d="M0.5,3.5 H10 L12.5,6 V15.5 H0.5 z" fill="#2e4a80" stroke="#1a2a50" stroke-width="0.8"/><rect x="3" y="4" width="6" height="3.5" fill="#c8d4e8"/><rect x="2.5" y="10.5" width="8" height="5" fill="#f4f6fa"/><path d="M7,4.5 H11 V1 L15.5,5 L11,9 V6.5 H7 z" fill="#5ac828" stroke="#2a8010" stroke-width="0.7"/></svg>
<svg style="left:815px;top:801px" width="16" height="16"><circle cx="6.5" cy="6.5" r="5.5" fill="#dbe8fb" stroke="#4070c0" stroke-width="1.3"/><path d="M4,6.5 h5 M6.5,4 v5" stroke="#3060b0" stroke-width="1.5"/><path d="M10.5,10.5 L15,15" stroke="#d08a20" stroke-width="2.5"/></svg>
<svg style="left:840px;top:801px" width="16" height="16"><circle cx="6.5" cy="6.5" r="5.5" fill="#dbe8fb" stroke="#4070c0" stroke-width="1.3"/><path d="M4,6.5 h5" stroke="#3060b0" stroke-width="1.5"/><path d="M10.5,10.5 L15,15" stroke="#d08a20" stroke-width="2.5"/></svg>

<!-- ===== PROPERTIES ===== -->
<div class="pnl" style="left:1236px;top:146px;width:247px;height:680px;background:#e9eaee"></div>
<div class="a" style="left:1237px;top:147px;width:245px;height:19px;background:#dfe0e5"></div>
<div class="ptitle" style="left:1243px;top:150px">Properties</div>
<svg style="left:1442px;top:151px" width="8" height="10"><path d="M1.5,0.5 h5 v5 h1 v1 h-7 v-1 h1 z M4,6.5 v3" fill="#777" stroke="#777"/></svg>
<svg style="left:1464px;top:152px" width="9" height="9"><path d="M1,1 L8,8 M8,1 L1,8" stroke="#777" stroke-width="2"/></svg>
<div class="a" style="left:1241px;top:171px;width:22px;height:22px;background:linear-gradient(90deg,#b8bcc6,#e4e6ea 18%,#eceef2 50%,#e4e6ea 82%,#b8bcc6)"></div>
<svg style="left:1244px;top:174px" width="20" height="17"><path d="M5,1 v5.9 M2,4 h5.9 M5,9 v5.9 M2,12 h5.9" stroke="#2a8ae8" stroke-width="2.2"/><path d="M10.8,1.2 h6.2" stroke="#333" stroke-width="1"/><path d="M10.8,3.4 h6.2 M10.8,5.7 h6.2 M10.8,11.6 h6.2 M10.8,13.6 h6.2" stroke="#555" stroke-width="0.9" stroke-dasharray="2.4 0.8"/><path d="M10.8,9.3 h6.2" stroke="#333" stroke-width="1"/></svg>
<svg style="left:1267px;top:173px" width="18" height="18"><path d="M3,1 h4 V12 H9.5 L5,17 L0.5,12 H3 z" fill="#8a3ae8"/><text x="8.5" y="8" font-size="8.5" font-weight="bold" fill="#f0a010" font-family="Liberation Sans">A</text><text x="9" y="17.5" font-size="8.5" font-weight="bold" fill="#2a88e0" font-family="Liberation Sans">Z</text></svg>
<div class="a" style="left:1291px;top:173px;width:1px;height:20px;background:#c4c7ce"></div>
<div class="a" style="left:1296px;top:171px;width:22px;height:22px;background:linear-gradient(90deg,#b8bcc6,#e4e6ea 18%,#eceef2 50%,#e4e6ea 82%,#b8bcc6)"></div>
<svg style="left:1299px;top:173px" width="16" height="17"><rect x="1" y="1.5" width="11.5" height="13" fill="#f4f6fc" stroke="#6a82c0"/><path d="M4,4.5 C2.5,6 2.5,8 4,9 C5,10 6.5,10 7.5,9.5 L13,15 C13.8,15.8 15,14.8 14.2,14 L8.8,8.2 C9.2,7 9,5.6 8,4.6 C7,3.6 5.6,3.4 4.6,3.8 L6.6,5.8 L6,7.4 L4.4,7.8 z" fill="#c8d0dc" stroke="#4a5a78" stroke-width="0.8"/></svg>
<svg style="left:1322px;top:173px" width="17" height="17"><rect x="4" y="1.5" width="11" height="13" fill="#f4f6fc" stroke="#6a82c0"/><path d="M6,2.5 L7.3,5.5 L10.5,5.8 L8,8 L8.8,11.2 L6,9.5 L3.2,11.2 L4,8 L1.5,5.8 L4.7,5.5 z" fill="#f8c030" stroke="#e07810" stroke-width="0.8"/><path d="M7.5,9 L13,14" stroke="#2a2a2a" stroke-width="1.8"/></svg>
<!-- grid -->
<div class="a" id="pgrid" style="left:1238px;top:198px;width:243px;height:533px;background:#fff;border:1px solid #b9bcc4"></div>
<!-- splitter / desc -->
<div class="a" style="left:1354px;top:732px;width:12px;height:2px;background:repeating-linear-gradient(90deg,#888 0 1px,transparent 1px 2px)"></div>
<div class="a" style="left:1238px;top:736px;width:243px;height:60px;border:1px solid #d3d5db;border-radius:3px;background:#e9eaee"></div>
<div class="a" style="left:1300px;top:797px;width:180px;height:27px;background:linear-gradient(#d9dadf,#e9eaee)"></div>
<div class="a" style="left:1241px;top:797px;width:1px;height:25px;background:#b9bcc4"></div>
<div class="a" style="left:1300px;top:797px;width:1px;height:27px;background:#c9ccd2"></div>
<div class="t" style="left:1251px;top:803px;font-size:12px">Prop...</div>
<div class="t" style="left:1311px;top:803px;font-size:12px">Smar...</div>
<div class="t" style="left:1370px;top:803px;font-size:12px">Sym...</div>
<div class="t" style="left:1429px;top:803px;font-size:12px">History</div>

<!-- ===== STATUS BAR ===== -->
<div class="a" style="left:5px;top:827px;width:1480px;height:29px;background:linear-gradient(#e3e4e8,#d9dade)"></div>
<div class="t" style="left:14px;top:835px;font-size:12px;color:#2a2a3a">Pos: 828 x 290, Size: 303 x 228, Angle: 0</div>
<div class="a" style="left:1100px;top:832px;width:1px;height:19px;background:#c2c4ca"></div>
<div class="t" style="left:1110px;top:835px;font-size:12px;color:#2a2a3a">1929 x 204</div>
<div class="a" style="left:1188px;top:832px;width:1px;height:19px;background:#c2c4ca"></div>
<div class="t" style="left:1200px;top:835px;font-size:12px;color:#2a2a3a">49%</div>
<svg style="left:1230px;top:834px" width="16" height="16"><circle cx="7.5" cy="7.5" r="6.5" fill="#f4f4f6" stroke="#999"/><path d="M4,7.5 h7" stroke="#777" stroke-width="2"/></svg>
<div class="a" style="left:1250px;top:841px;width:160px;height:1px;background:linear-gradient(90deg,#c8b0e0,#d0d0d8 30%)"></div>
<div class="a" style="left:1330px;top:836px;width:1px;height:11px;background:#c8c8d0"></div>
<svg style="left:1271px;top:834px" width="12" height="17"><path d="M0.5,0.5 h10 v11 l-5,5 l-5,-5 z" fill="#e8eefc" stroke="#9aa0b8"/></svg>
<svg style="left:1414px;top:834px" width="16" height="16"><circle cx="7.5" cy="7.5" r="6.5" fill="#f4f4f6" stroke="#999"/><path d="M4,7.5 h7 M7.5,4 v7" stroke="#777" stroke-width="2"/></svg>
<svg style="left:1437px;top:833px" width="17" height="18"><rect x="0.5" y="4.5" width="11" height="13" fill="#fff" stroke="#6880b8"/><text x="1.5" y="16" font-size="5" font-weight="bold" fill="#333" font-family="Liberation Sans">100</text><circle cx="9" cy="5" r="3.5" fill="#cfe0fa" stroke="#4070c0"/><path d="M11.5,7.5 L15,11" stroke="#e08020" stroke-width="2"/></svg>
<svg style="left:1461px;top:834px" width="17" height="16"><path d="M3,7 A5.5,5.5 0 0 1 13,4" fill="none" stroke="#3a8ad8" stroke-width="2.2"/><path d="M14,9 A5.5,5.5 0 0 1 4,12" fill="none" stroke="#3a8ad8" stroke-width="2.2"/><path d="M11,1 L15,5 L10,6 z M6,15 L2,11 L7,10 z" fill="#3a8ad8"/></svg>
<!-- ===== HMI CANVAS ===== -->
<div class="a" style="left:281px;top:228px;width:941px;height:529px;background:#aaaaaa"></div>
<div class="a" style="left:270px;top:217px;width:942px;height:531px;background-color:#151a28;background-image:radial-gradient(circle,#1b2132 2px,transparent 2.5px);background-size:9.2px 9.2px;background-position:0.4px -0.7px;border-left:1px solid #05070c;border-right:4px solid #0f131d;border-bottom:2px solid #000;box-shadow:inset 0 -1px 0 #444a58"></div>
<div class="a" style="left:270px;top:217px;width:942px;height:2px;background:#0a0d14"></div><div class="a" style="left:273px;top:219px;width:935px;height:43px;background:linear-gradient(#33405a 0,#2a3649 8%,#243042);border-bottom:1px solid #161c28;border-radius:5px 5px 0 0"></div>
<svg style="left:281px;top:224px" width="26" height="28"><defs><radialGradient id="xg" cx="0.4" cy="0.4" r="0.7"><stop offset="0" stop-color="#2a90d8"/><stop offset="0.6" stop-color="#1a62a8"/><stop offset="1" stop-color="#123e70"/></radialGradient></defs><path d="M1,6 L6,1 L12,7.5 L18,1 L23,6 L17,13 L23,20 L18,25 L12,18.5 L6,25 L1,20 L7,13 z" fill="url(#xg)"/></svg>
<div class="t" style="left:307px;top:227px;font-size:21px;font-weight:bold;color:#fff;letter-spacing:-0.5px">XLS</div>
<div class="t" style="left:287px;top:271px;font-size:11px;font-weight:bold;color:#fff;transform:scaleX(0.84);transform-origin:0 0">BoilerID</div>
<div class="a" style="left:283px;top:288px;width:60px;height:25px;background:#12161f"></div>
<div class="a" style="left:283px;top:314px;width:60px;height:60px;background:linear-gradient(#3c4660 0,#3c4660 4px,#4b5374 4px,#4b5374 95%,#3a4058)"></div>
<div class="t" style="left:287px;top:322px;font-size:11px;font-weight:bold;color:#fff;transform:scaleX(0.77);transform-origin:0 0">RunMode</div>
<div class="a" style="left:283px;top:380px;width:60px;height:58px;background:linear-gradient(#1b8a58 0,#1b8a58 4px,#23b574 4px,#23b574 93%,#1c8f5c)"></div>
<div class="t" style="left:324px;top:402px;font-size:12px;font-weight:bold;color:#fff;transform:scaleX(0.8);transform-origin:0 0">RU</div>
<div class="a" style="left:283px;top:446px;width:60px;height:60px;background:linear-gradient(#1b8a58 0,#1b8a58 4px,#23b574 4px)"></div>
<div class="t" style="left:287px;top:452px;font-size:11px;font-weight:bold;color:#fff;transform:scaleX(0.72);transform-origin:0 0">RUN / STOP</div>
<div class="a" style="left:283px;top:511px;width:70px;height:51px;border:2px solid #d4d4d4;border-radius:5px;background:linear-gradient(#3c3c3c,#181818 45%,#000 48%,#080808);box-shadow:inset 0 0 0 1px #5a5a5a"></div>
<div class="t" style="left:292px;top:521px;font-size:10px;font-weight:bold;color:#fff;transform:scaleX(0.72);transform-origin:0 0">Burner</div>
<div class="t" style="left:292px;top:544px;font-size:10px;font-weight:bold;color:#fff;transform:scaleX(0.72);transform-origin:0 0">READY</div>
<div class="a" style="left:283px;top:568px;width:70px;height:51px;border:2px solid #d4d4d4;border-radius:5px;background:linear-gradient(#3c3c3c,#181818 45%,#000 48%,#080808);box-shadow:inset 0 0 0 1px #5a5a5a"></div>
<div class="t" style="left:292px;top:578px;font-size:10px;font-weight:bold;color:#fff;transform:scaleX(0.72);transform-origin:0 0">DRIVING LOA</div>
<div class="a" style="left:300px;top:602px;width:40px;height:7px;background:#a2a2a2;border-left:2px solid #fff"></div>
<div class="a" style="left:283px;top:626px;width:70px;height:51px;border:2px solid #d4d4d4;border-radius:5px;background:linear-gradient(#3c3c3c,#181818 45%,#000 48%,#080808);box-shadow:inset 0 0 0 1px #5a5a5a"></div>
<div class="t" style="left:292px;top:636px;font-size:10px;font-weight:bold;color:#fff;transform:scaleX(0.72);transform-origin:0 0">WATER LEVE</div>
<div class="a" style="left:300px;top:660px;width:40px;height:7px;background:#a2a2a2;border-left:2px solid #3a8ad8"></div>
<div class="a" style="left:283px;top:683px;width:70px;height:51px;border:2px solid #d4d4d4;border-radius:5px;background:linear-gradient(#3c3c3c,#181818 45%,#000 48%,#080808);box-shadow:inset 0 0 0 1px #5a5a5a"></div>
<div class="t" style="left:292px;top:693px;font-size:10px;font-weight:bold;color:#fff;transform:scaleX(0.72);transform-origin:0 0">EFFICIENCY</div>
<div class="a" style="left:1140px;top:223px;width:24px;height:31px;background:linear-gradient(#eef2f4,#c8ccd0 40%,#9aa0a4 60%,#d8dcde);border-radius:3px"></div>
<svg style="left:1176px;top:230px" width="20" height="20"><path d="M1,1 L19,19 M19,1 L1,19" stroke="#fff" stroke-width="2.2"/></svg>
<svg style="left:1174px;top:263px" width="24" height="22"><circle cx="4" cy="18" r="3.2" fill="#10ee10"/><path d="M3,9 A10,10 0 0 1 13,19" fill="none" stroke="#10ee10" stroke-width="3.2"/><path d="M3,2 A17,17 0 0 1 20,19" fill="none" stroke="#10ee10" stroke-width="3.2"/></svg>
<div class="a" style="left:1120px;top:288px;width:77px;height:28px;border:2px solid #d4d4d4;border-radius:5px;background:linear-gradient(#3c3c3c,#181818 45%,#000 48%,#080808);box-shadow:inset 0 0 0 1px #5a5a5a"></div>
<div class="t" style="left:1153px;top:297px;font-size:10px;font-weight:bold;color:#fff;transform:scaleX(0.75);transform-origin:0 0">MP 1EA</div>
<div class="a" style="left:1120px;top:325px;width:77px;height:51px;border:2px solid #d4d4d4;border-radius:5px;background:linear-gradient(#3c3c3c,#181818 45%,#000 48%,#080808);box-shadow:inset 0 0 0 1px #5a5a5a"></div>
<div class="t" style="left:1153px;top:335px;font-size:10px;font-weight:bold;color:#fff;transform:scaleX(0.75);transform-origin:0 0">%]</div>
<div class="t" style="left:1152px;top:355px;font-size:13px;font-weight:bold;color:#fff;transform:scaleX(0.8);transform-origin:0 0">0</div>
<div class="a" style="left:1120px;top:384px;width:77px;height:52px;border:2px solid #d4d4d4;border-radius:5px;background:linear-gradient(#3c3c3c,#181818 45%,#000 48%,#080808);box-shadow:inset 0 0 0 1px #5a5a5a"></div>
<div class="t" style="left:1153px;top:394px;font-size:10px;font-weight:bold;color:#fff;transform:scaleX(0.75);transform-origin:0 0">MPER</div>
<div class="t" style="left:1152px;top:414px;font-size:13px;font-weight:bold;color:#fff;transform:scaleX(0.8);transform-origin:0 0">0.0</div>
<div class="a" style="left:1120px;top:445px;width:77px;height:51px;border:2px solid #d4d4d4;border-radius:5px;background:linear-gradient(#3c3c3c,#181818 45%,#000 48%,#080808);box-shadow:inset 0 0 0 1px #5a5a5a"></div>
<div class="t" style="left:1153px;top:455px;font-size:10px;font-weight:bold;color:#fff;transform:scaleX(0.75);transform-origin:0 0">LVE2</div>
<div class="t" style="left:1152px;top:475px;font-size:13px;font-weight:bold;color:#fff;transform:scaleX(0.8);transform-origin:0 0">AE</div>
<div class="a" style="left:1120px;top:505px;width:77px;height:51px;border:2px solid #d4d4d4;border-radius:5px;background:linear-gradient(#3c3c3c,#181818 45%,#000 48%,#080808);box-shadow:inset 0 0 0 1px #5a5a5a"></div>
<div class="t" style="left:1153px;top:525px;font-size:10px;font-weight:bold;color:#fff;white-space:pre;transform:scaleX(0.8);transform-origin:0 0">0   %</div>
<div class="a" style="left:1140px;top:538px;width:40px;height:7px;background:#a2a2a2"></div>
<div class="a" style="left:1120px;top:566px;width:77px;height:51px;border:2px solid #d4d4d4;border-radius:5px;background:linear-gradient(#3c3c3c,#181818 45%,#000 48%,#080808);box-shadow:inset 0 0 0 1px #5a5a5a"></div>
<div class="a" style="left:1140px;top:625px;width:56px;height:42px;background:#0a0c12"></div>
<div class="a" style="left:1140px;top:667px;width:56px;height:70px;background:#2a2a2a"></div>
<!-- props grid rows -->
<div class="a" style="left:1239px;top:199px;width:241px;height:18px;background:#efeff2;border-bottom:1px solid #d9dadf"></div>
<div class="t" style="left:1259px;top:201px;font-size:12px">Appearance</div>
<svg style="left:1466px;top:205px" width="9" height="6"><path d="M1,5 L4.5,1.5 L8,5" fill="none" stroke="#666" stroke-width="1.3"/></svg>
<div class="a" style="left:1239px;top:217px;width:17px;height:18px;background:#efeff2"></div>
<div class="a" style="left:1255px;top:217px;width:105px;height:18px;background:#f6f6f9;border-left:1px solid #d9dadf;border-right:1px solid #d9dadf;border-bottom:1px solid #d9dadf"></div>
<div class="a" style="left:1360px;top:217px;width:120px;height:18px;background:#fff;border-bottom:1px solid #d9dadf"></div>
<div class="t" style="left:1274px;top:219px;font-size:12px;color:#1b1b30">Opacity</div>
<div class="t" style="left:1363px;top:219px;font-size:12px;font-weight:bold;color:#1b1b30">1</div>
<div class="a" style="left:1239px;top:235px;width:241px;height:18px;background:#efeff2;border-bottom:1px solid #d9dadf"></div>
<div class="t" style="left:1259px;top:237px;font-size:12px">Binding</div>
<svg style="left:1466px;top:241px" width="9" height="6"><path d="M1,5 L4.5,1.5 L8,5" fill="none" stroke="#666" stroke-width="1.3"/></svg>
<div class="a" style="left:1239px;top:253px;width:17px;height:18px;background:#efeff2"></div>
<div class="a" style="left:1255px;top:253px;width:105px;height:18px;background:#f6f6f9;border-left:1px solid #d9dadf;border-right:1px solid #d9dadf;border-bottom:1px solid #d9dadf"></div>
<div class="a" style="left:1360px;top:253px;width:120px;height:18px;background:#fff;border-bottom:1px solid #d9dadf"></div>
<div class="t" style="left:1274px;top:255px;font-size:12px;color:#1b1b30">Animation Tag</div>
<div class="a" style="left:1239px;top:271px;width:17px;height:18px;background:#efeff2"></div>
<div class="a" style="left:1255px;top:271px;width:105px;height:18px;background:#f6f6f9;border-left:1px solid #d9dadf;border-right:1px solid #d9dadf;border-bottom:1px solid #d9dadf"></div>
<div class="a" style="left:1360px;top:271px;width:120px;height:18px;background:#fff;border-bottom:1px solid #d9dadf"></div>
<div class="t" style="left:1274px;top:273px;font-size:12px;color:#1b1b30">URI Tag</div>
<div class="a" style="left:1239px;top:289px;width:241px;height:18px;background:#efeff2;border-bottom:1px solid #d9dadf"></div>
<div class="t" style="left:1259px;top:291px;font-size:12px">General</div>
<svg style="left:1466px;top:295px" width="9" height="6"><path d="M1,5 L4.5,1.5 L8,5" fill="none" stroke="#666" stroke-width="1.3"/></svg>
<div class="a" style="left:1239px;top:307px;width:17px;height:18px;background:#efeff2"></div>
<div class="a" style="left:1255px;top:307px;width:105px;height:18px;background:#f6f6f9;border-left:1px solid #d9dadf;border-right:1px solid #d9dadf;border-bottom:1px solid #d9dadf"></div>
<div class="a" style="left:1360px;top:307px;width:120px;height:18px;background:#fff;border-bottom:1px solid #d9dadf"></div>
<div class="t" style="left:1274px;top:309px;font-size:12px;color:#1b1b30">Description</div>
<div class="a" style="left:1239px;top:325px;width:17px;height:18px;background:#efeff2"></div>
<div class="a" style="left:1255px;top:325px;width:105px;height:18px;background:#f6f6f9;border-left:1px solid #d9dadf;border-right:1px solid #d9dadf;border-bottom:1px solid #d9dadf"></div>
<div class="a" style="left:1360px;top:325px;width:120px;height:18px;background:#fff;border-bottom:1px solid #d9dadf"></div>
<div class="t" style="left:1274px;top:327px;font-size:12px;color:#1b1b30">Name</div>
<div class="t" style="left:1363px;top:327px;font-size:12px;font-weight:bold;color:#1b1b30">image_8</div>
<div class="a" style="left:1239px;top:343px;width:17px;height:18px;background:#efeff2"></div>
<div class="a" style="left:1255px;top:343px;width:105px;height:18px;background:#f6f6f9;border-left:1px solid #d9dadf;border-right:1px solid #d9dadf;border-bottom:1px solid #d9dadf"></div>
<div class="a" style="left:1360px;top:343px;width:120px;height:18px;background:#fff;border-bottom:1px solid #d9dadf"></div>
<div class="t" style="left:1274px;top:345px;font-size:12px;color:#1b1b30">Tooltip</div>
<div class="a" style="left:1239px;top:361px;width:241px;height:19px;background:#efeff2;border-bottom:1px solid #d9dadf"></div>
<div class="t" style="left:1259px;top:363px;font-size:12px">Image</div>
<svg style="left:1466px;top:367px" width="9" height="6"><path d="M1,5 L4.5,1.5 L8,5" fill="none" stroke="#666" stroke-width="1.3"/></svg>
<div class="a" style="left:1239px;top:380px;width:17px;height:18px;background:#efeff2"></div>
<div class="a" style="left:1255px;top:380px;width:105px;height:18px;background:#f6f6f9;border-left:1px solid #d9dadf;border-right:1px solid #d9dadf;border-bottom:1px solid #d9dadf"></div>
<div class="a" style="left:1360px;top:380px;width:120px;height:18px;background:#fff;border-bottom:1px solid #d9dadf"></div>
<div class="t" style="left:1274px;top:382px;font-size:12px;color:#1b1b30">Animated</div>
<div class="t" style="left:1363px;top:382px;font-size:12px;font-weight:bold;color:#1b1b30">True</div>
<div class="a" style="left:1239px;top:398px;width:17px;height:18px;background:#efeff2"></div>
<div class="a" style="left:1255px;top:398px;width:105px;height:18px;background:#f6f6f9;border-left:1px solid #d9dadf;border-right:1px solid #d9dadf;border-bottom:1px solid #d9dadf"></div>
<div class="a" style="left:1360px;top:398px;width:120px;height:18px;background:#fff;border-bottom:1px solid #d9dadf"></div>
<div class="t" style="left:1274px;top:400px;font-size:12px;color:#1b1b30">Color Filter</div>
<svg style="left:1261px;top:403px" width="5" height="8"><path d="M0.5,0.5 L4,4 L0.5,7.5 z" fill="#555"/></svg>
<div class="a" style="left:1239px;top:416px;width:17px;height:18px;background:#efeff2"></div>
<div class="a" style="left:1255px;top:416px;width:105px;height:18px;background:#f6f6f9;border-left:1px solid #d9dadf;border-right:1px solid #d9dadf;border-bottom:1px solid #d9dadf"></div>
<div class="a" style="left:1360px;top:416px;width:120px;height:18px;background:#fff;border-bottom:1px solid #d9dadf"></div>
<div class="t" style="left:1274px;top:418px;font-size:12px;color:#a3a5ae">ImageHeight</div>
<div class="t" style="left:1363px;top:418px;font-size:12px;font-weight:normal;color:#a3a5ae">256</div>
<div class="a" style="left:1239px;top:434px;width:17px;height:18px;background:#efeff2"></div>
<div class="a" style="left:1255px;top:434px;width:105px;height:18px;background:#f6f6f9;border-left:1px solid #d9dadf;border-right:1px solid #d9dadf;border-bottom:1px solid #d9dadf"></div>
<div class="a" style="left:1360px;top:434px;width:120px;height:18px;background:#fff;border-bottom:1px solid #d9dadf"></div>
<div class="t" style="left:1274px;top:436px;font-size:12px;color:#a3a5ae">ImageWidth</div>
<div class="t" style="left:1363px;top:436px;font-size:12px;font-weight:normal;color:#a3a5ae">308</div>
<div class="a" style="left:1239px;top:452px;width:241px;height:18px;background:#efeff2;border-bottom:1px solid #d9dadf"></div>
<div class="t" style="left:1259px;top:454px;font-size:12px">Layout</div>
<svg style="left:1466px;top:458px" width="9" height="6"><path d="M1,5 L4.5,1.5 L8,5" fill="none" stroke="#666" stroke-width="1.3"/></svg>
<div class="a" style="left:1239px;top:470px;width:17px;height:18px;background:#efeff2"></div>
<div class="a" style="left:1255px;top:470px;width:105px;height:18px;background:#f6f6f9;border-left:1px solid #d9dadf;border-right:1px solid #d9dadf;border-bottom:1px solid #d9dadf"></div>
<div class="a" style="left:1360px;top:470px;width:120px;height:18px;background:#fff;border-bottom:1px solid #d9dadf"></div>
<div class="t" style="left:1274px;top:472px;font-size:12px;color:#1b1b30">Angle</div>
<div class="t" style="left:1363px;top:472px;font-size:12px;font-weight:bold;color:#1b1b30">0</div>
<div class="a" style="left:1239px;top:488px;width:17px;height:18px;background:#efeff2"></div>
<div class="a" style="left:1255px;top:488px;width:105px;height:18px;background:#f6f6f9;border-left:1px solid #d9dadf;border-right:1px solid #d9dadf;border-bottom:1px solid #d9dadf"></div>
<div class="a" style="left:1360px;top:488px;width:120px;height:18px;background:#fff;border-bottom:1px solid #d9dadf"></div>
<div class="t" style="left:1274px;top:490px;font-size:12px;color:#1b1b30">Height</div>
<div class="t" style="left:1363px;top:490px;font-size:12px;font-weight:bold;color:#1b1b30">228</div>
<div class="a" style="left:1239px;top:506px;width:17px;height:18px;background:#efeff2"></div>
<div class="a" style="left:1255px;top:506px;width:105px;height:18px;background:#f6f6f9;border-left:1px solid #d9dadf;border-right:1px solid #d9dadf;border-bottom:1px solid #d9dadf"></div>
<div class="a" style="left:1360px;top:506px;width:120px;height:18px;background:#fff;border-bottom:1px solid #d9dadf"></div>
<div class="t" style="left:1274px;top:508px;font-size:12px;color:#1b1b30">Width</div>
<div class="t" style="left:1363px;top:508px;font-size:12px;font-weight:bold;color:#1b1b30">303</div>
<div class="a" style="left:1239px;top:524px;width:17px;height:18px;background:#efeff2"></div>
<div class="a" style="left:1255px;top:524px;width:105px;height:18px;background:#f6f6f9;border-left:1px solid #d9dadf;border-right:1px solid #d9dadf;border-bottom:1px solid #d9dadf"></div>
<div class="a" style="left:1360px;top:524px;width:120px;height:18px;background:#fff;border-bottom:1px solid #d9dadf"></div>
<div class="t" style="left:1274px;top:526px;font-size:12px;color:#1b1b30">X</div>
<div class="t" style="left:1363px;top:526px;font-size:12px;font-weight:bold;color:#1b1b30">828</div>
<div class="a" style="left:1239px;top:542px;width:17px;height:18px;background:#efeff2"></div>
<div class="a" style="left:1255px;top:542px;width:105px;height:18px;background:#f6f6f9;border-left:1px solid #d9dadf;border-right:1px solid #d9dadf;border-bottom:1px solid #d9dadf"></div>
<div class="a" style="left:1360px;top:542px;width:120px;height:18px;background:#fff;border-bottom:1px solid #d9dadf"></div>
<div class="t" style="left:1274px;top:544px;font-size:12px;color:#1b1b30">Y</div>
<div class="t" style="left:1363px;top:544px;font-size:12px;font-weight:bold;color:#1b1b30">290</div>
<div class="a" style="left:1239px;top:560px;width:241px;height:18px;background:#efeff2;border-bottom:1px solid #d9dadf"></div>
<div class="t" style="left:1259px;top:562px;font-size:12px">Security</div>
<svg style="left:1466px;top:566px" width="9" height="6"><path d="M1,5 L4.5,1.5 L8,5" fill="none" stroke="#666" stroke-width="1.3"/></svg>
<div class="a" style="left:1239px;top:578px;width:17px;height:18px;background:#efeff2"></div>
<div class="a" style="left:1255px;top:578px;width:105px;height:18px;background:#f6f6f9;border-left:1px solid #d9dadf;border-right:1px solid #d9dadf;border-bottom:1px solid #d9dadf"></div>
<div class="a" style="left:1360px;top:578px;width:120px;height:18px;background:#fff;border-bottom:1px solid #d9dadf"></div>
<div class="t" style="left:1274px;top:580px;font-size:12px;color:#1b1b30">SecurityKey</div>
<!-- ===== DIALOG ===== -->
<div class="a" style="left:336px;top:108px;width:818px;height:644px;border:1px solid #9fa2ac;background:#dfe0e5"></div>
<div class="a" style="left:337px;top:109px;width:816px;height:21px;background:linear-gradient(#e6e7eb,#dcdde2)"></div>
<div class="t" style="left:343px;top:113px;font-size:12.9px;font-weight:bold;color:#a9aebb">Objects Settings</div>
<div class="a" style="left:1121px;top:112px;width:29px;height:15px;border:1px solid #a9acb6;border-radius:3px;background:linear-gradient(#eeeff2,#d9dade)"></div>
<svg style="left:1131px;top:115px" width="10" height="9"><path d="M1,1 L9,8 M9,1 L1,8" stroke="#6e7180" stroke-width="2"/></svg>
<div class="a" style="left:340px;top:130px;width:810px;height:618px;border:1px solid #b7bac2;background:#e9eaee"></div>

<!-- image preview -->
<div class="a" style="left:354px;top:146px;width:262px;height:262px;border-top:1px solid #707070;border-left:1px solid #707070;border-right:1px solid #f4f4f6;border-bottom:1px solid #f4f4f6;background:repeating-conic-gradient(#fff 0 25%,#cccccc 0 50%) 0 0/12.5px 12.5px"></div>
<svg style="left:361px;top:184px" width="248" height="187" viewBox="0 0 248 187">
<defs>
<linearGradient id="stg" x1="0" y1="0" x2="0" y2="1">
<stop offset="0" stop-color="#2a2420"/><stop offset="0.18" stop-color="#5a3a14"/><stop offset="0.4" stop-color="#e8962a"/><stop offset="0.65" stop-color="#f6ac3c"/><stop offset="0.85" stop-color="#c07018"/><stop offset="1" stop-color="#2a2420"/>
</linearGradient>
<pattern id="stripes" width="320" height="6.9" patternUnits="userSpaceOnUse" patternTransform="rotate(-3.8)">
<rect width="320" height="6.9" fill="url(#stg)"/>
</pattern>
<linearGradient id="dim" x1="0" y1="0" x2="0" y2="1"><stop offset="0" stop-color="#000" stop-opacity="0.35"/><stop offset="0.55" stop-color="#000" stop-opacity="0.05"/><stop offset="1" stop-color="#000" stop-opacity="0"/></linearGradient>
<clipPath id="tubeclip"><path d="M15,21 L182,8 C200,18 214,36 222,58 C230,80 236,110 236,140 C236,160 235,175 234,187 L15,187 z"/></clipPath>
<linearGradient id="pipeg" x1="0" y1="0" x2="0" y2="1"><stop offset="0" stop-color="#f8f8f8"/><stop offset="0.5" stop-color="#dadada"/><stop offset="1" stop-color="#929292"/></linearGradient>
<linearGradient id="burng" x1="0" y1="0" x2="0" y2="1"><stop offset="0" stop-color="#5e5e5e"/><stop offset="0.4" stop-color="#8a8888"/><stop offset="1" stop-color="#5a5a5a"/></linearGradient>
<linearGradient id="flameg" x1="0" y1="0" x2="1" y2="0"><stop offset="0" stop-color="#f0a020"/><stop offset="0.18" stop-color="#f8c850"/><stop offset="0.4" stop-color="#fff4c8"/><stop offset="0.75" stop-color="#fffce8"/><stop offset="1" stop-color="#f8d870"/></linearGradient>
</defs>
<path d="M4,13.5 L145,3 L248,0 L248,187 L0,187 L0,73 L4,73 z" fill="#383838"/>
<rect x="0" y="0" width="8.6" height="73" fill="#7c7c7c"/>
<path d="M146,3 L248,0 L248,187 L238,187 L240,96 C236,70 222,40 190,16 z" fill="#4a4a4a"/>
<path d="M210,30 L248,28 L248,187 L240,187 L240,96 C236,70 226,48 210,30 z" fill="#545454"/>
<path d="M226,60 L248,56 L248,187 L240,187 L240,96 C237,82 232,70 226,60 z" fill="#5e5e5e"/>
<path d="M186,12 C198,20 206,30 212,40 L220,35 C212,24 202,16 192,10 z" fill="#606060"/>
<rect x="0" y="73" width="5" height="56" fill="#2446b8"/>
<g clip-path="url(#tubeclip)"><rect x="-20" y="-20" width="320" height="230" fill="url(#stripes)"/><rect x="0" y="0" width="248" height="110" fill="url(#dim)"/></g>
<path d="M146,3 C175,8 200,22 214,40 C228,60 236,90 237,120 C238,150 236,170 235,187" fill="none" stroke="#2a2a2a" stroke-width="4"/>
<path d="M15,21 V126" stroke="#2e2e2e" stroke-width="3"/>
<path d="M16,18 L180,7 L184,19 L20,33 z" fill="url(#pipeg)"/>
<path d="M18,22 L180,12" stroke="#a8a8a8" stroke-width="0.7"/>
<circle cx="19" cy="24" r="4" fill="#8a8a8a" stroke="#555" stroke-width="0.6"/><circle cx="26" cy="26" r="4" fill="#9a9a9a" stroke="#555" stroke-width="0.6"/><circle cx="33" cy="28" r="4.2" fill="#a8a8a8" stroke="#555" stroke-width="0.6"/>
<path d="M62,128 C72,126 85,122 96,121 C105,119 113,117 119,116 C135,114 150,113.5 165,114 C180,114 195,112.5 210,112 C220,111.5 230,111 238,110.8 L238,118 C220,123 208,127 200,128.5 C185,133 172,138 160,140 C148,142 135,143 119,144.5 C105,147 95,151 85,151.5 C75,151 70,150 64,149 z" fill="url(#flameg)"/>
<path d="M60,140 C66,150 78,153 92,150 L84,154 C72,156 64,152 60,146 z" fill="#c85a10" opacity="0.6"/>
<rect x="0" y="124.7" width="44" height="38.3" fill="url(#burng)"/>
<path d="M27,121.8 L47,121.8 C60,124 67,135 67,146 C67,158 62,167 56,170 L27,170 z" fill="#595959"/>
<path d="M0,165.4 L32,160.8 L81,187 L0,187 z" fill="#2448c0"/>
<path d="M101,166 L237,143.5 L237,187 L101,187 z" fill="#4e4e4e"/>
<path d="M102,163 L237.6,143.3 L237.6,153.8 L102,174.7 z" fill="url(#pipeg)"/>
<path d="M102,173.6 L235.3,153 L235.3,163 L102,184 z" fill="url(#pipeg)"/>
<ellipse cx="106" cy="169" rx="4" ry="5.5" fill="#777" stroke="#555" stroke-width="0.6"/><ellipse cx="105" cy="179" rx="4" ry="5.5" fill="#777" stroke="#555" stroke-width="0.6"/>
</svg>


<!-- object list group -->
<div class="a" style="left:354px;top:416px;width:263px;height:288px;border:1px solid #c8cbd2;border-radius:3px;background:#e9eaee"></div>
<svg style="left:361px;top:424px" width="17" height="17"><path d="M3,1.5 h14 M3,3.8 h14 M9,6.8 h8 M9,8.8 h8 M9,10.8 h8 M3,13.3 h14 M3,15.5 h14" stroke="#2a2a2a" stroke-width="1.1"/><path d="M0.5,8.8 L4.5,5.8 V7.8 H7.5 V9.8 H4.5 V11.8 z" fill="#2a2a2a"/></svg>
<svg style="left:385px;top:424px" width="17" height="17"><path d="M2,1.5 h14 M2,3.8 h14 M8,6.8 h8 M8,8.8 h8 M8,10.8 h8 M2,13.3 h14 M2,15.5 h14" stroke="#2a2a2a" stroke-width="1.1"/><path d="M7,8.8 L3,5.8 V7.8 H0 V9.8 H3 V11.8 z" fill="#2a2a2a"/></svg>
<svg style="left:409px;top:424px" width="16" height="16"><ellipse cx="8" cy="2.5" rx="7" ry="2.2" fill="#e8e8e8" stroke="#888" stroke-width="0.8"/><path d="M1,2.5 C2,8 6,8 6.5,10 V15 L9.5,14 V10 C10,8 14,8 15,2.5" fill="#b8b8b8" stroke="#888" stroke-width="0.8"/><path d="M3.5,10 L4.4,12 L6.5,12.2 L5,13.6 L5.5,15.6 L3.5,14.5 L1.5,15.6 L2,13.6 L0.5,12.2 L2.6,12 z" fill="#3a9ae8"/><circle cx="12" cy="12.5" r="2" fill="none" stroke="#999" stroke-width="0.8"/></svg>
<div class="a" style="left:430px;top:421px;width:22px;height:22px;background:linear-gradient(90deg,#b8bcc6,#e4e6ea 18%,#eceef2 50%,#e4e6ea 82%,#b8bcc6)"></div>
<svg style="left:433px;top:424px" width="16" height="16"><rect x="0.5" y="0.5" width="15" height="15" fill="#fff" stroke="#6a82c0"/><path d="M1,1 h3.5 v3.5 h-3.5 z M8,1 h3.5 v3.5 h-3.5 z M4.5,4.5 h3.5 v3.5 h-3.5 z M11.5,4.5 h3.5 v3.5 h-3.5 z M1,8 h3.5 v3.5 h-3.5 z M8,8 h3.5 v3.5 h-3.5 z M4.5,11.5 h3.5 v3.5 h-3.5 z M11.5,11.5 h3.5 v3.5 h-3.5 z" fill="#c8c8c8"/><rect x="3" y="8" width="10" height="5" fill="#777"/><rect x="6" y="2" width="5" height="8" fill="#6aaaf0"/></svg>
<svg style="left:458px;top:424px" width="15" height="16"><rect x="4.5" y="0.5" width="9" height="11" fill="#eef2fb" stroke="#6a82c0"/><rect x="0.5" y="4" width="9" height="11.5" fill="#eef2fb" stroke="#6a82c0"/></svg>
<svg style="left:482px;top:424px" width="16" height="17"><rect x="0.5" y="1.5" width="10" height="12" rx="1" fill="#f2c060" stroke="#c08020"/><rect x="3" y="0.5" width="5" height="2.5" rx="1" fill="#dde4f0" stroke="#6a82c0" stroke-width="0.8"/><rect x="5.5" y="6" width="9" height="10" fill="#eef2fb" stroke="#6a82c0"/></svg>
<div class="a" style="left:355px;top:446px;width:261px;height:257px;background:#fff;border:1px solid #aeb1b9"></div>
<div class="a" style="left:385px;top:447px;width:212px;height:18px;background:#eceef2"></div>
<svg style="left:368px;top:448px" width="15" height="13"><rect x="0.5" y="0.5" width="14" height="12" fill="#f0f0f0" stroke="#8a8a8a"/><defs><linearGradient id="imgic" x1="0" y1="0" x2="1" y2="1"><stop offset="0" stop-color="#b0b0b0"/><stop offset="1" stop-color="#555"/></linearGradient></defs><rect x="2" y="2" width="11" height="9" fill="url(#imgic)"/><circle cx="9" cy="5" r="2" fill="none" stroke="#ddd" stroke-width="0.8"/></svg>
<div class="t" style="left:388px;top:450px;font-size:12px">image_8</div>
<div class="a" style="left:557px;top:448px;width:17px;height:16px;border:1px solid #aab;background:#fff"></div>
<svg style="left:558px;top:448px" width="16" height="16"><path d="M8,1 L10,6 L15,6 L11,9.5 L12.5,15 L8,12 L3.5,15 L5,9.5 L1,6 L6,6 z" fill="#4aa8f0" stroke="#2a78c0" stroke-width="0.7"/></svg>
<div class="a" style="left:577px;top:448px;width:17px;height:16px;border:1px solid #555;background:#fff"></div>
<svg style="left:579px;top:451px" width="13" height="10"><path d="M1,5 C3,1 10,1 12,5 C10,8 3,8 1,5 z" fill="#fff" stroke="#111" stroke-width="1.2"/><circle cx="6.5" cy="4.5" r="2" fill="#111"/><path d="M2,9 h9" stroke="#111"/></svg>
<div class="btn" style="left:355px;top:711px;width:120px;height:23px">Replace Tags</div>

<!-- effects group -->
<div class="a" style="left:629px;top:145px;width:232px;height:264px;border:1px solid #c8cbd2;border-radius:3px;background:#e9eaee"></div>
<div class="a" style="left:630px;top:146px;width:230px;height:20px;background:linear-gradient(#e4e5e9,#dcdde2);border-radius:3px 3px 0 0"></div>
<div class="t" style="left:641px;top:150px;font-size:12px">Effects</div>
<svg style="left:637px;top:174px" width="17" height="17"><defs><linearGradient id="bcg" x1="0" y1="0" x2="0" y2="1"><stop offset="0" stop-color="#c4defa"/><stop offset="1" stop-color="#4a88d8"/></linearGradient><linearGradient id="gcg" x1="0" y1="0" x2="0" y2="1"><stop offset="0" stop-color="#b4e060"/><stop offset="1" stop-color="#4a9a18"/></linearGradient></defs><circle cx="8" cy="8" r="7.5" fill="url(#bcg)" stroke="#3a70c0"/><path d="M6.3,3.5 h3.4 v2.8 h2.8 v3.4 h-2.8 v2.8 h-3.4 v-2.8 h-2.8 v-3.4 h2.8 z" fill="#fff" stroke="#3a70c0" stroke-width="0.6"/></svg>
<div class="arr" style="left:656px;top:181px;border-left-width:3px;border-right-width:3px;border-top-width:3px"></div>
<svg style="left:668px;top:174px" width="17" height="17"><circle cx="8" cy="8" r="7.5" fill="url(#bcg)" stroke="#3a70c0"/><rect x="3.5" y="6.3" width="9" height="3.4" fill="#fff" stroke="#3a70c0" stroke-width="0.6"/></svg>
<svg style="left:692px;top:174px" width="17" height="17"><circle cx="8" cy="8" r="7.5" fill="url(#gcg)" stroke="#3a7a10"/><path d="M6.4,3 h3.2 v4.5 h2.8 L8,12.8 L3.6,7.5 h2.8 z" fill="#f4f8f0" stroke="#3a7a10" stroke-width="0.6"/></svg>
<svg style="left:716px;top:174px" width="17" height="17"><circle cx="8" cy="8" r="7.5" fill="url(#gcg)" stroke="#3a7a10"/><path d="M6.4,13 h3.2 v-4.5 h2.8 L8,3.2 L3.6,8.5 h2.8 z" fill="#f4f8f0" stroke="#3a7a10" stroke-width="0.6"/></svg>
<div class="a" style="left:631px;top:197px;width:228px;height:210px;background:#fff;border:1px solid #aeb1b9"></div>
<div class="a" style="left:632px;top:198px;width:226px;height:16px;background:#dfe8fa"></div>
<div class="t" style="left:636px;top:200px;font-size:12px">Visible</div>

<!-- actions group -->
<div class="a" style="left:629px;top:415px;width:232px;height:289px;border:1px solid #c8cbd2;border-radius:3px;background:#e9eaee"></div>
<div class="a" style="left:630px;top:416px;width:230px;height:20px;background:linear-gradient(#e4e5e9,#dcdde2);border-radius:3px 3px 0 0"></div>
<div class="t" style="left:641px;top:420px;font-size:12px">Actions</div>
<div class="a" style="left:631px;top:436px;width:228px;height:267px;background:#fff;border:1px solid #aeb1b9"></div>
<div class="a" style="left:635px;top:440px;width:13px;height:13px;border:1px solid #8e929c;background:#fff;box-shadow:inset 0 0 0 1px #d8dae0"></div>
<div class="t" style="left:653px;top:440px;font-size:12px">Horizontal Slide</div>
<div class="a" style="left:635px;top:457px;width:13px;height:13px;border:1px solid #8e929c;background:#fff;box-shadow:inset 0 0 0 1px #d8dae0"></div>
<div class="t" style="left:653px;top:457px;font-size:12px">Vertical Slide</div>
<div class="a" style="left:635px;top:474px;width:13px;height:13px;border:1px solid #8e929c;background:#fff;box-shadow:inset 0 0 0 1px #d8dae0"></div>
<div class="t" style="left:653px;top:474px;font-size:12px">Click - Tag Value</div>
<div class="a" style="left:635px;top:491px;width:13px;height:13px;border:1px solid #8e929c;background:#fff;box-shadow:inset 0 0 0 1px #d8dae0"></div>
<div class="t" style="left:653px;top:491px;font-size:12px">Click - Color</div>
<div class="a" style="left:635px;top:508px;width:13px;height:13px;border:1px solid #8e929c;background:#fff;box-shadow:inset 0 0 0 1px #d8dae0"></div>
<div class="t" style="left:653px;top:508px;font-size:12px">Click - Page</div>
<div class="a" style="left:635px;top:525px;width:13px;height:13px;border:1px solid #8e929c;background:#fff;box-shadow:inset 0 0 0 1px #d8dae0"></div>
<div class="t" style="left:653px;top:525px;font-size:12px">Click - Execute SQL</div>
<div class="a" style="left:635px;top:542px;width:13px;height:13px;border:1px solid #8e929c;background:#fff;box-shadow:inset 0 0 0 1px #d8dae0"></div>
<div class="t" style="left:653px;top:542px;font-size:12px">Click - Scenario</div>
<div class="a" style="left:635px;top:559px;width:13px;height:13px;border:1px solid #8e929c;background:#fff;box-shadow:inset 0 0 0 1px #d8dae0"></div>
<div class="t" style="left:653px;top:559px;font-size:12px">Hover - Color</div>
<div class="a" style="left:635px;top:576px;width:13px;height:13px;border:1px solid #8e929c;background:#fff;box-shadow:inset 0 0 0 1px #d8dae0"></div>
<div class="t" style="left:653px;top:576px;font-size:12px">Click - Language</div>
<!-- visible group -->
<div class="a" style="left:867px;top:145px;width:270px;height:560px;border:1px solid #c8cbd2;border-radius:3px;background:#e9eaee"></div>
<div class="a" style="left:868px;top:146px;width:268px;height:20px;background:linear-gradient(#e4e5e9,#dcdde2);border-radius:3px 3px 0 0"></div>
<div class="t" style="left:879px;top:150px;font-size:12px">Visible</div>
<div class="a" style="left:872px;top:174px;width:260px;height:62px;border:1px solid #c8cbd2;border-radius:3px;background:#e9eaee"></div>
<div class="a" style="left:873px;top:175px;width:258px;height:19px;background:linear-gradient(#e4e5e9,#dcdde2);border-radius:3px 3px 0 0"></div>
<div class="t" style="left:884px;top:179px;font-size:12px">Execution Mode</div>
<svg style="left:879px;top:205px" width="14" height="14"><circle cx="7" cy="7" r="6.3" fill="#f4f4f6" stroke="#8a8e98"/><circle cx="7" cy="7" r="3.5" fill="#5a82d0"/><circle cx="6.3" cy="6.3" r="1.5" fill="#b8d0f8"/></svg>
<div class="t" style="left:897px;top:207px;font-size:12px">Visible</div>
<svg style="left:969px;top:205px" width="14" height="14"><circle cx="7" cy="7" r="6.3" fill="#f8f8fa" stroke="#8a8e98"/></svg>
<div class="t" style="left:987px;top:207px;font-size:12px">Condition</div>
<div class="a" style="left:872px;top:244px;width:260px;height:121px;border:1px solid #c8cbd2;border-radius:3px;background:#e9eaee"></div>
<div class="a" style="left:873px;top:245px;width:258px;height:20px;background:linear-gradient(#e4e5e9,#dcdde2);border-radius:3px 3px 0 0"></div>
<div class="t" style="left:885px;top:249px;font-size:12px">Tag</div>
<div class="t" style="left:907px;top:277px;font-size:12px">Tag :</div>
<div class="a" style="left:942px;top:273px;width:175px;height:20px;background:#fff;border:1px solid #b9bcc4"></div>
<div class="t" style="left:945px;top:277px;font-size:12px">06_PJT.tag.pan</div>
<svg style="left:1103px;top:282px" width="10" height="3"><circle cx="1.2" cy="1.2" r="1.2" fill="#222"/><circle cx="5" cy="1.2" r="1.2" fill="#222"/><circle cx="8.8" cy="1.2" r="1.2" fill="#222"/></svg>
<div class="t" style="left:877px;top:308px;font-size:12px">Condition :</div>
<div class="a" style="left:942px;top:303px;width:65px;height:20px;background:#fff;border:1px solid #b9bcc4"></div>
<div class="t" style="left:945px;top:307px;font-size:12px">!=</div>
<div class="arr" style="left:994px;top:312px"></div>
<div class="t" style="left:898px;top:337px;font-size:12px">Value :</div>
<div class="a" style="left:942px;top:334px;width:133px;height:20px;background:#fff;border:1px solid #b9bcc4"></div>
<div class="t" style="left:945px;top:338px;font-size:12px">0</div>
<div class="btn" style="left:981px;top:711px;width:75px;height:23px">OK</div>
<div class="btn" style="left:1062px;top:711px;width:75px;height:23px">Cancel</div>
</body></html>
